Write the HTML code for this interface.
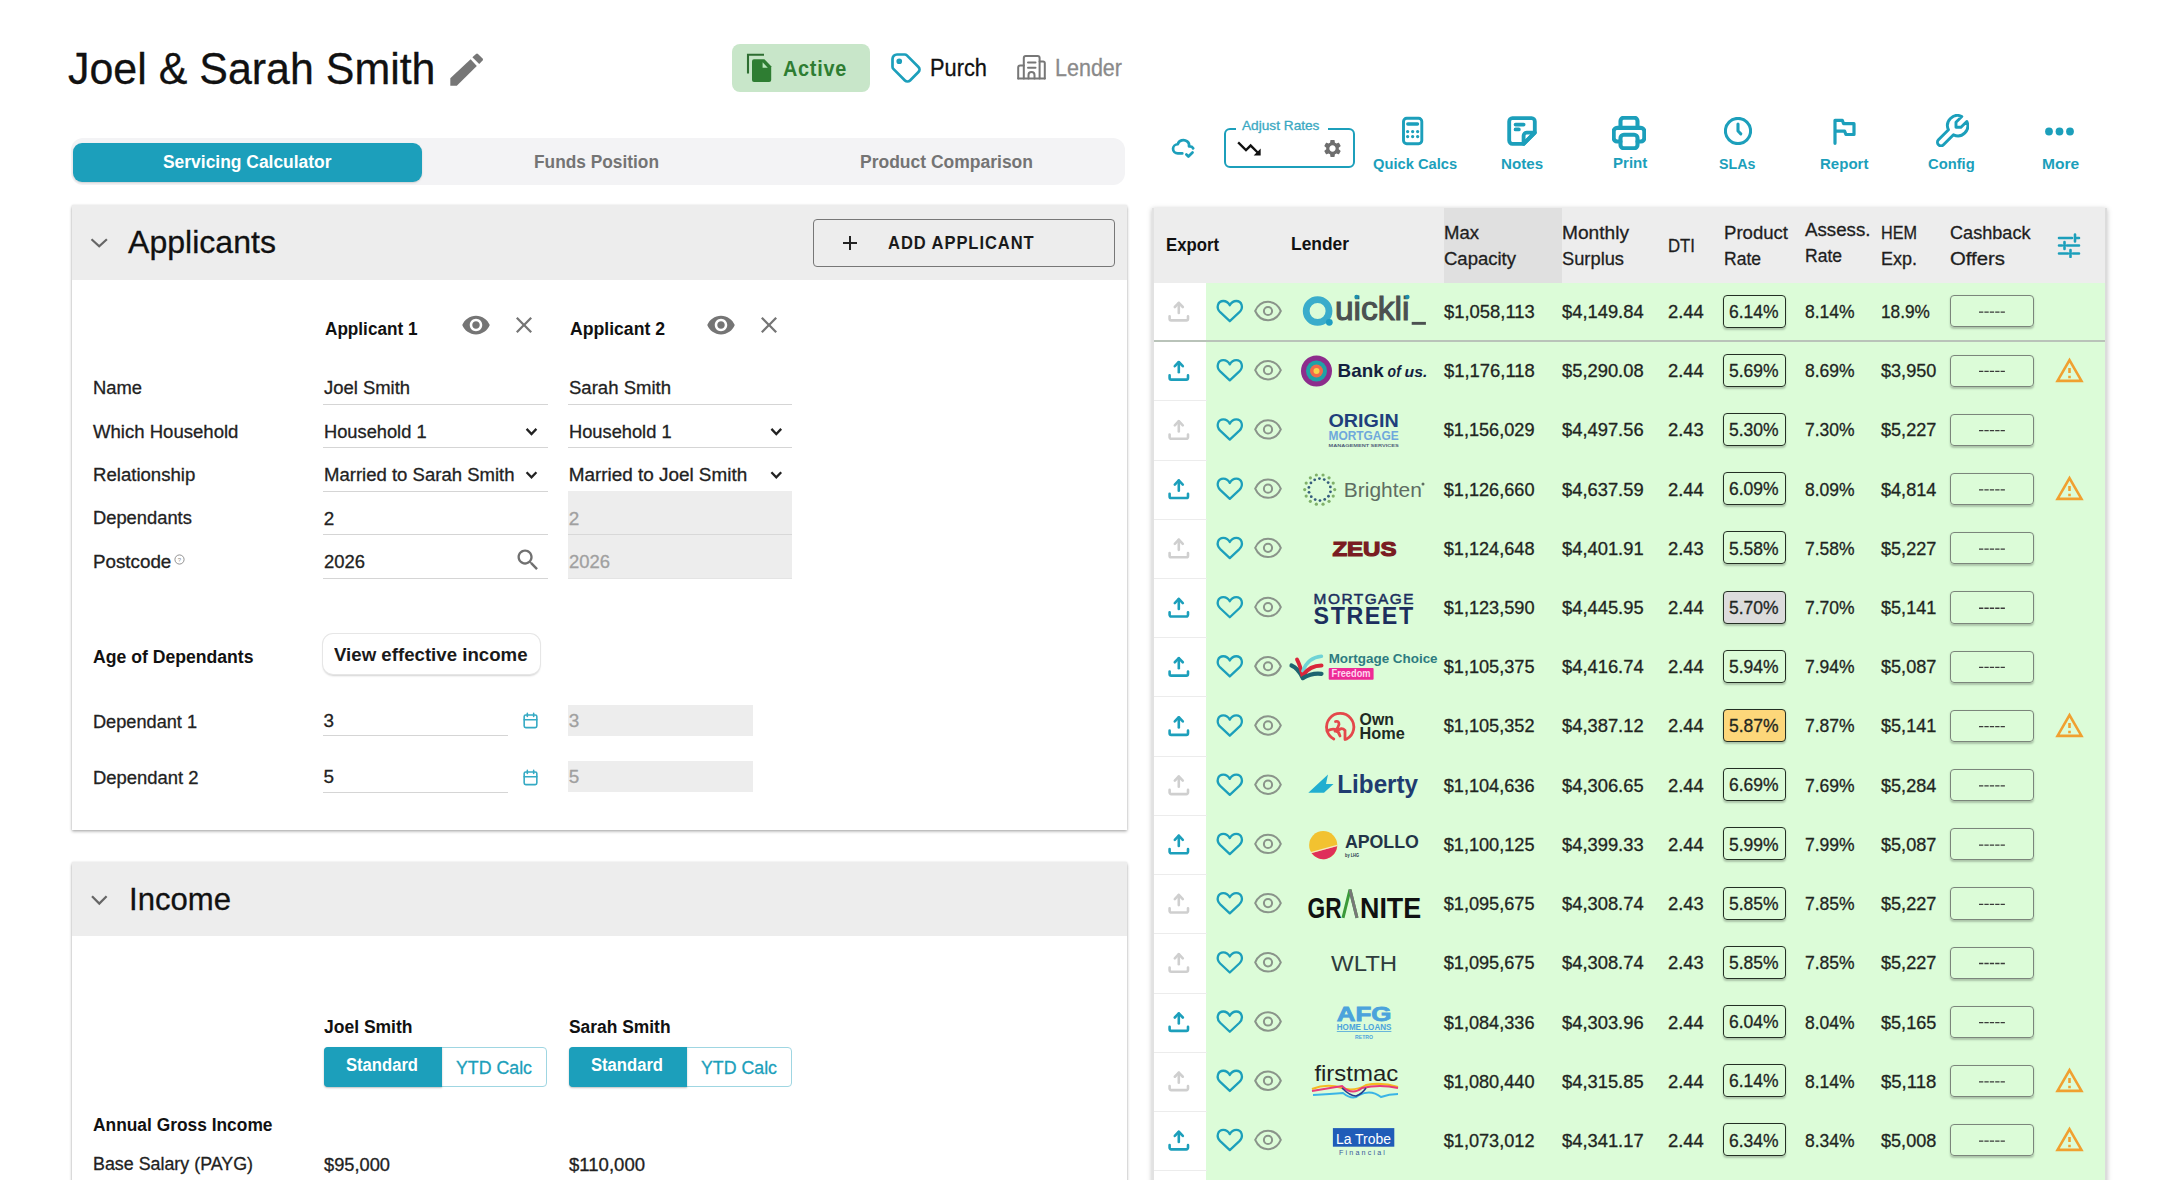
<!DOCTYPE html>
<html><head><meta charset="utf-8"><style>
html,body{margin:0;padding:0;}
body{width:2184px;height:1180px;position:relative;overflow:hidden;background:#fff;font-family:"Liberation Sans",sans-serif;}
.t{position:absolute;white-space:nowrap;line-height:1;transform-origin:0 0;}
.r{position:absolute;}
</style></head><body>
<div class="t" style="left:67.50px;top:46.00px;font-size:45.06px;color:#111;-webkit-text-stroke:0.3px #111;transform:scaleX(0.9531);">Joel &amp; Sarah Smith</div>
<svg class="r" style="left:0;top:0" width="2184" height="1180" viewBox="0 0 2184 1180"><g fill="#767676"><path d="M450.3 78.3L470.6 59.3L476.8 65.9L456.8 85.8H450.3Z"/><path d="M472.4 57.3L476 54a1.5 1.5 0 0 1 2 0l4.6 4.6a1.5 1.5 0 0 1 0 2l-3.4 3.5Z"/></g></svg>
<div class="r" style="left:732.00px;top:43.50px;width:138.00px;height:48.00px;background:#c8e6c9;border-radius:8px;"></div>
<svg class="r" style="left:0;top:0" width="2184" height="1180" viewBox="0 0 2184 1180"><path d="M748 73.4V54.8H764" fill="none" stroke="#2e6e32" stroke-width="2.1"/><path fill="#2e7d32" d="M754 59.2h10.4l6.8 7.1V79.9a2 2 0 0 1-2 2H754a2 2 0 0 1-2-2V61.2a2 2 0 0 1 2-2z"/><path fill="#b8e6bb" d="M762.6 62.3v5.4h5.2z"/></svg>
<div class="t" style="left:783.00px;top:58.00px;font-size:21.80px;font-weight:bold;color:#2e7d32;transform:scaleX(0.9112);letter-spacing:0.8px;">Active</div>
<svg class="r" style="left:888.00px;top:50.00px;" width="36.00" height="36.00" viewBox="0 0 24 24"><g fill="none" stroke="#1c9fbb" stroke-width="1.8" stroke-linecap="round" stroke-linejoin="round"><path d="M7.5 7.5m-1 0a1 1 0 1 0 2 0a1 1 0 1 0 -2 0"/><path d="M3 6v5.172a2 2 0 0 0 .586 1.414l7.71 7.71a2.410 2.410 0 0 0 3.408 0l5.592 -5.592a2.410 2.410 0 0 0 0 -3.408l-7.710 -7.710a2 2 0 0 0 -1.414 -.586h-5.172a3 3 0 0 0 -3 3z"/></g></svg>
<div class="t" style="left:930.00px;top:56.00px;font-size:23.98px;color:#111;-webkit-text-stroke:0.3px #111;transform:scaleX(0.9104);">Purch</div>
<svg class="r" style="left:0;top:0" width="2184" height="1180" viewBox="0 0 2184 1180"><g fill="none" stroke="#777" stroke-width="2" stroke-linejoin="round" stroke-linecap="round"><path d="M1023.8 78.5V58a2 2 0 0 1 2-2h11.8a2 2 0 0 1 2 2v20.5"/><path d="M1018.2 78.5V67.5a2 2 0 0 1 2-2h3.6M1039.6 61.6h3.6a1.6 1.6 0 0 1 1.6 1.6V78.5"/><path d="M1018.2 78.5H1044.8"/><path d="M1028 62.5h7.5M1028 67.7h7.5"/><path d="M1028.5 78.5v-3.5a3 3 0 0 1 6 0v3.5"/></g></svg>
<div class="t" style="left:1055.00px;top:56.00px;font-size:23.98px;color:#8a8a8a;-webkit-text-stroke:0.3px #8a8a8a;transform:scaleX(0.8978);">Lender</div>
<div class="r" style="left:71.00px;top:138.00px;width:1054.00px;height:47.00px;background:#f3f3f5;border-radius:12px;"></div>
<div class="r" style="left:73.00px;top:143.00px;width:349.00px;height:39.00px;background:#1c9fbb;border-radius:9px;box-shadow:0 1px 2px rgba(0,0,0,.15);"></div>
<div class="t" style="left:163.00px;top:153.00px;font-size:18.90px;font-weight:bold;color:#fff;transform:scaleX(0.9225);">Servicing Calculator</div>
<div class="t" style="left:534.00px;top:153.00px;font-size:18.90px;font-weight:bold;color:#747474;transform:scaleX(0.9160);">Funds Position</div>
<div class="t" style="left:860.00px;top:153.00px;font-size:18.90px;font-weight:bold;color:#747474;transform:scaleX(0.9259);">Product Comparison</div>
<div class="r" style="left:71.50px;top:205.00px;width:1055.00px;height:625.00px;background:#fff;box-shadow:0 1.5px 3px rgba(0,0,0,.3),0 0 2px rgba(0,0,0,.12);"></div>
<div class="r" style="left:71.50px;top:205.00px;width:1055.00px;height:75.00px;background:#ededed;"></div>
<svg class="r" style="left:0;top:0" width="2184" height="1180" viewBox="0 0 2184 1180"><path d="M91.5 239.2L99.2 246.3L106.9 239.2" fill="none" stroke="#666" stroke-width="2.2"/></svg>
<div class="t" style="left:128.00px;top:226.00px;font-size:31.98px;color:#111;-webkit-text-stroke:0.3px #111;transform:scaleX(1.0033);">Applicants</div>
<div class="r" style="left:813.00px;top:218.50px;width:302.00px;height:48.00px;border:1.5px solid #777;border-radius:4px;box-sizing:border-box;"></div>
<svg class="r" style="left:838.00px;top:231.00px;" width="24.00" height="24.00" viewBox="0 0 24 24"><path fill="#222" d="M19 13h-6v6h-2v-6H5v-2h6V5h2v6h6v2z"/></svg>
<div class="t" style="left:888.00px;top:233.00px;font-size:19.19px;font-weight:bold;color:#1a1a1a;transform:scaleX(0.8610);letter-spacing:1.1px;">ADD APPLICANT</div>
<div class="t" style="left:325.00px;top:320.00px;font-size:18.90px;font-weight:bold;color:#111;transform:scaleX(0.9084);">Applicant 1</div>
<div class="t" style="left:570.00px;top:320.00px;font-size:18.90px;font-weight:bold;color:#111;transform:scaleX(0.9329);">Applicant 2</div>
<svg class="r" style="left:460.50px;top:309.50px;" width="30.00" height="30.00" viewBox="0 0 24 24"><path fill="#757575" d="M12 4.5C7 4.5 2.73 7.61 1 12c1.73 4.39 6 7.5 11 7.5s9.27-3.11 11-7.5c-1.73-4.39-6-7.5-11-7.5zM12 17c-2.76 0-5-2.24-5-5s2.24-5 5-5 5 2.240 5 5-2.24 5-5 5zm0-8c-1.66 0-3 1.34-3 3s1.34 3 3 3 3-1.34 3-3-1.34-3-3-3z"/></svg>
<svg class="r" style="left:512.00px;top:313.00px;" width="24.00" height="24.00" viewBox="1.5 1.5 21 21"><path fill="#757575" d="M19 6.41L17.59 5 12 10.59 6.41 5 5 6.41 10.59 12 5 17.59 6.41 19 12 13.41 17.59 19 19 17.59 13.41 12z"/></svg>
<svg class="r" style="left:705.50px;top:309.50px;" width="30.00" height="30.00" viewBox="0 0 24 24"><path fill="#757575" d="M12 4.5C7 4.5 2.73 7.61 1 12c1.73 4.39 6 7.5 11 7.5s9.27-3.11 11-7.5c-1.73-4.39-6-7.5-11-7.5zM12 17c-2.76 0-5-2.24-5-5s2.24-5 5-5 5 2.240 5 5-2.24 5-5 5zm0-8c-1.66 0-3 1.34-3 3s1.34 3 3 3 3-1.34 3-3-1.34-3-3-3z"/></svg>
<svg class="r" style="left:757.00px;top:313.00px;" width="24.00" height="24.00" viewBox="1.5 1.5 21 21"><path fill="#757575" d="M19 6.41L17.59 5 12 10.59 6.41 5 5 6.41 10.59 12 5 17.59 6.41 19 12 13.41 17.59 19 19 17.59 13.41 12z"/></svg>
<div class="t" style="left:93.00px;top:379.00px;font-size:18.90px;color:#222;-webkit-text-stroke:0.3px #222;transform:scaleX(0.9727);">Name</div>
<div class="t" style="left:93.00px;top:423.00px;font-size:18.90px;color:#222;-webkit-text-stroke:0.3px #222;transform:scaleX(0.9822);">Which Household</div>
<div class="t" style="left:93.00px;top:466.00px;font-size:18.90px;color:#222;-webkit-text-stroke:0.3px #222;transform:scaleX(0.9841);">Relationship</div>
<div class="t" style="left:93.00px;top:509.00px;font-size:18.90px;color:#222;-webkit-text-stroke:0.3px #222;transform:scaleX(0.9701);">Dependants</div>
<div class="t" style="left:93.00px;top:553.00px;font-size:18.90px;color:#222;-webkit-text-stroke:0.3px #222;transform:scaleX(0.9943);">Postcode</div>
<svg class="r" style="left:173.50px;top:553.50px;" width="11.00" height="11.00" viewBox="0 0 24 24"><circle cx="12" cy="12" r="10" fill="none" stroke="#888" stroke-width="2"/><text x="12" y="17" font-size="13" text-anchor="middle" fill="#888" font-family="Liberation Sans">?</text></svg>
<div class="r" style="left:323.00px;top:403.50px;width:225.00px;height:1.20px;background:#d5d5d5;"></div>
<div class="r" style="left:323.00px;top:447.00px;width:225.00px;height:1.20px;background:#d5d5d5;"></div>
<div class="r" style="left:323.00px;top:490.50px;width:225.00px;height:1.20px;background:#d5d5d5;"></div>
<div class="r" style="left:323.00px;top:534.00px;width:225.00px;height:1.20px;background:#d5d5d5;"></div>
<div class="r" style="left:323.00px;top:577.50px;width:225.00px;height:1.20px;background:#d5d5d5;"></div>
<div class="r" style="left:568.00px;top:403.50px;width:224.00px;height:1.20px;background:#d5d5d5;"></div>
<div class="r" style="left:568.00px;top:447.00px;width:224.00px;height:1.20px;background:#d5d5d5;"></div>
<div class="r" style="left:568.00px;top:490.50px;width:224.00px;height:1.20px;background:#d5d5d5;"></div>
<div class="r" style="left:568.00px;top:491.00px;width:224.00px;height:87.50px;background:#ededed;"></div>
<div class="r" style="left:568.00px;top:534.00px;width:224.00px;height:1.20px;background:#d8d8d8;"></div>
<div class="r" style="left:568.00px;top:577.50px;width:224.00px;height:1.20px;background:#e4e4e4;"></div>
<div class="t" style="left:323.70px;top:379.00px;font-size:18.90px;color:#222;-webkit-text-stroke:0.3px #222;transform:scaleX(0.9752);">Joel Smith</div>
<div class="t" style="left:568.70px;top:379.00px;font-size:18.90px;color:#222;-webkit-text-stroke:0.3px #222;transform:scaleX(0.9815);">Sarah Smith</div>
<div class="t" style="left:323.70px;top:423.00px;font-size:18.90px;color:#222;-webkit-text-stroke:0.3px #222;transform:scaleX(0.9666);">Household 1</div>
<div class="t" style="left:568.70px;top:423.00px;font-size:18.90px;color:#222;-webkit-text-stroke:0.3px #222;transform:scaleX(0.9666);">Household 1</div>
<div class="t" style="left:323.70px;top:466.00px;font-size:18.90px;color:#222;-webkit-text-stroke:0.3px #222;transform:scaleX(0.9809);">Married to Sarah Smith</div>
<div class="t" style="left:568.70px;top:466.00px;font-size:18.90px;color:#222;-webkit-text-stroke:0.3px #222;">Married to Joel Smith</div>
<svg class="r" style="left:0;top:0" width="2184" height="1180" viewBox="0 0 2184 1180"><path d="M526.6 428.90000000000003L531.5 434.0L536.4 428.90000000000003" fill="none" stroke="#222" stroke-width="2.3"/></svg>
<svg class="r" style="left:0;top:0" width="2184" height="1180" viewBox="0 0 2184 1180"><path d="M526.6 472.3L531.5 477.4L536.4 472.3" fill="none" stroke="#222" stroke-width="2.3"/></svg>
<svg class="r" style="left:0;top:0" width="2184" height="1180" viewBox="0 0 2184 1180"><path d="M771.4 428.90000000000003L776.3 434.0L781.1999999999999 428.90000000000003" fill="none" stroke="#222" stroke-width="2.3"/></svg>
<svg class="r" style="left:0;top:0" width="2184" height="1180" viewBox="0 0 2184 1180"><path d="M771.4 472.3L776.3 477.4L781.1999999999999 472.3" fill="none" stroke="#222" stroke-width="2.3"/></svg>
<div class="t" style="left:323.70px;top:510.00px;font-size:18.90px;color:#222;-webkit-text-stroke:0.3px #222;">2</div>
<div class="t" style="left:568.70px;top:510.00px;font-size:18.90px;color:#a0a0a0;-webkit-text-stroke:0.3px #a0a0a0;">2</div>
<div class="t" style="left:323.70px;top:553.00px;font-size:18.90px;color:#222;-webkit-text-stroke:0.3px #222;transform:scaleX(0.9762);">2026</div>
<div class="t" style="left:568.70px;top:553.00px;font-size:18.90px;color:#a0a0a0;-webkit-text-stroke:0.3px #a0a0a0;transform:scaleX(0.9762);">2026</div>
<svg class="r" style="left:514.00px;top:546.00px;" width="28.00" height="28.00" viewBox="0 0 24 24"><path fill="#707070" d="M15.5 14h-.79l-.28-.27C15.41 12.59 16 11.11 16 9.5 16 5.91 13.09 3 9.5 3S3 5.91 3 9.5 5.91 16 9.5 16c1.61 0 3.09-.59 4.23-1.57l.27.28v.79l5 4.99L20.49 19l-4.99-5zm-6 0C7.01 14 5 11.99 5 9.5S7.01 5 9.5 5 14 7.01 14 9.5 11.99 14 9.5 14z"/></svg>
<div class="t" style="left:93.20px;top:648.00px;font-size:18.90px;font-weight:bold;color:#111;transform:scaleX(0.9323);">Age of Dependants</div>
<div class="r" style="left:323.00px;top:633.50px;width:216.50px;height:40.50px;border-radius:10px;box-shadow:0 0 0 1px #e6e6e6,0 1.5px 2px rgba(0,0,0,.18);background:#fff;"></div>
<div class="t" style="left:334.00px;top:646.00px;font-size:18.90px;font-weight:bold;color:#1a1a1a;transform:scaleX(0.9874);">View effective income</div>
<div class="t" style="left:93.00px;top:713.00px;font-size:18.90px;color:#222;-webkit-text-stroke:0.3px #222;transform:scaleX(0.9617);">Dependant 1</div>
<div class="t" style="left:93.00px;top:769.00px;font-size:18.90px;color:#222;-webkit-text-stroke:0.3px #222;transform:scaleX(0.9756);">Dependant 2</div>
<div class="t" style="left:323.50px;top:712.00px;font-size:18.90px;color:#222;-webkit-text-stroke:0.3px #222;">3</div>
<div class="t" style="left:323.50px;top:768.00px;font-size:18.90px;color:#222;-webkit-text-stroke:0.3px #222;">5</div>
<div class="r" style="left:323.00px;top:735.00px;width:185.00px;height:1.20px;background:#d5d5d5;"></div>
<div class="r" style="left:323.00px;top:792.00px;width:185.00px;height:1.20px;background:#d5d5d5;"></div>
<div class="r" style="left:568.00px;top:704.50px;width:184.50px;height:31.50px;background:#ededed;"></div>
<div class="r" style="left:568.00px;top:760.50px;width:184.50px;height:31.50px;background:#ededed;"></div>
<div class="t" style="left:568.70px;top:712.00px;font-size:18.90px;color:#a0a0a0;-webkit-text-stroke:0.3px #a0a0a0;">3</div>
<div class="t" style="left:568.70px;top:768.00px;font-size:18.90px;color:#a0a0a0;-webkit-text-stroke:0.3px #a0a0a0;">5</div>
<svg class="r" style="left:521.00px;top:711.00px;" width="19.00" height="19.00" viewBox="0 0 24 24"><g fill="none" stroke="#35aac4" stroke-width="2" stroke-linecap="round" stroke-linejoin="round"><path d="M4 7a2 2 0 0 1 2 -2h12a2 2 0 0 1 2 2v12a2 2 0 0 1 -2 2h-12a2 2 0 0 1 -2 -2v-12z"/><path d="M16 3v4M8 3v4M4 11h16"/></g></svg>
<svg class="r" style="left:521.00px;top:767.50px;" width="19.00" height="19.00" viewBox="0 0 24 24"><g fill="none" stroke="#35aac4" stroke-width="2" stroke-linecap="round" stroke-linejoin="round"><path d="M4 7a2 2 0 0 1 2 -2h12a2 2 0 0 1 2 2v12a2 2 0 0 1 -2 2h-12a2 2 0 0 1 -2 -2v-12z"/><path d="M16 3v4M8 3v4M4 11h16"/></g></svg>
<div class="r" style="left:71.50px;top:861.50px;width:1055.00px;height:330.00px;background:#fff;box-shadow:0 1.5px 3px rgba(0,0,0,.3),0 0 2px rgba(0,0,0,.12);"></div>
<div class="r" style="left:71.50px;top:861.50px;width:1055.00px;height:74.00px;background:#ededed;"></div>
<svg class="r" style="left:0;top:0" width="2184" height="1180" viewBox="0 0 2184 1180"><path d="M92 896.2L99.3 903.6L106.6 896.2" fill="none" stroke="#666" stroke-width="2.2"/></svg>
<div class="t" style="left:129.00px;top:883.00px;font-size:31.98px;color:#111;-webkit-text-stroke:0.3px #111;transform:scaleX(0.9730);">Income</div>
<div class="t" style="left:323.80px;top:1018.00px;font-size:18.90px;font-weight:bold;color:#111;transform:scaleX(0.9264);">Joel Smith</div>
<div class="t" style="left:568.60px;top:1018.00px;font-size:18.90px;font-weight:bold;color:#111;transform:scaleX(0.9209);">Sarah Smith</div>
<div class="r" style="left:323.80px;top:1046.50px;width:223.00px;height:40.00px;border:1.2px solid #9fd6e2;border-radius:4px;box-sizing:border-box;background:#fff;"></div>
<div class="r" style="left:323.80px;top:1046.50px;width:118.00px;height:40.00px;background:#1c9fbb;border-radius:4px 0 0 4px;box-shadow:0 1px 2px rgba(0,0,0,.25);"></div>
<div class="t" style="left:346.40px;top:1056.00px;font-size:18.90px;font-weight:bold;color:#fff;transform:scaleX(0.8794);">Standard</div>
<div class="t" style="left:456.00px;top:1059.00px;font-size:18.90px;color:#1c9fbb;-webkit-text-stroke:0.3px #1c9fbb;transform:scaleX(0.9403);">YTD Calc</div>
<div class="r" style="left:568.60px;top:1046.50px;width:223.00px;height:40.00px;border:1.2px solid #9fd6e2;border-radius:4px;box-sizing:border-box;background:#fff;"></div>
<div class="r" style="left:568.60px;top:1046.50px;width:118.00px;height:40.00px;background:#1c9fbb;border-radius:4px 0 0 4px;box-shadow:0 1px 2px rgba(0,0,0,.25);"></div>
<div class="t" style="left:591.20px;top:1056.00px;font-size:18.90px;font-weight:bold;color:#fff;transform:scaleX(0.8794);">Standard</div>
<div class="t" style="left:700.80px;top:1059.00px;font-size:18.90px;color:#1c9fbb;-webkit-text-stroke:0.3px #1c9fbb;transform:scaleX(0.9403);">YTD Calc</div>
<div class="t" style="left:93.00px;top:1116.00px;font-size:18.90px;font-weight:bold;color:#111;transform:scaleX(0.9193);">Annual Gross Income</div>
<div class="t" style="left:93.00px;top:1155.00px;font-size:18.90px;color:#222;-webkit-text-stroke:0.3px #222;transform:scaleX(0.9448);">Base Salary (PAYG)</div>
<div class="t" style="left:323.80px;top:1156.00px;font-size:18.90px;color:#222;-webkit-text-stroke:0.3px #222;transform:scaleX(0.9670);">$95,000</div>
<div class="t" style="left:568.60px;top:1156.00px;font-size:18.90px;color:#222;-webkit-text-stroke:0.3px #222;transform:scaleX(0.9826);">$110,000</div>
<svg class="r" style="left:1171.40px;top:135.40px;" width="24.60" height="24.60" viewBox="0 0 24 24"><g fill="none" stroke="#1c9fbb" stroke-width="2.65" stroke-linecap="round" stroke-linejoin="round"><path d="M11 18.004h-4.343c-2.572 -.004 -4.657 -2.011 -4.657 -4.487c0 -2.475 2.085 -4.482 4.657 -4.482c.393 -1.762 1.794 -3.2 3.675 -3.773c1.88 -.572 3.956 -.193 5.444 1c1.488 1.19 2.162 3.007 1.77 4.769h.99c1.388 0 2.585 .82 3.138 2.007"/><path d="M15 19l2 2l4 -4"/></g></svg>
<div class="r" style="left:1224.30px;top:127.60px;width:130.30px;height:40.50px;border:2.6px solid #1c9fbb;border-radius:6px;box-sizing:border-box;"></div>
<div class="r" style="left:1236.00px;top:124.00px;width:92.00px;height:8.00px;background:#fff;"></div>
<div class="t" style="left:1241.50px;top:119.00px;font-size:13.37px;color:#3aa8c2;-webkit-text-stroke:0.3px #3aa8c2;transform:scaleX(1.0225);">Adjust Rates</div>
<svg class="r" style="left:1235.00px;top:139.00px;" width="28.00" height="19.00" viewBox="0 0 24 16"><path fill="#111" d="M16 14l2.29-2.29-4.88-4.88-4 4L2 3.41 3.41 2l6 6 4-4 6.3 6.29L22 8v6z"/></svg>
<svg class="r" style="left:1322.00px;top:138.00px;" width="21.00" height="21.00" viewBox="0 0 24 24"><path fill="#6e6e6e" d="M19.14 12.94c.04-.3.06-.61.06-.94 0-.32-.02-.64-.07-.94l2.03-1.58c.18-.14.23-.41.12-.61l-1.92-3.32c-.12-.22-.37-.29-.59-.22l-2.39.96c-.5-.38-1.03-.7-1.62-.94l-.36-2.54c-.04-.24-.24-.41-.48-.41h-3.84c-.24 0-.43.17-.47.41l-.36 2.54c-.59.24-1.13.57-1.62.94l-2.39-.96c-.22-.08-.47 0-.59.22L2.74 8.87c-.12.21-.08.47.12.61l2.03 1.58c-.05.3-.09.63-.09.94s.02.64.07.94l-2.03 1.58c-.18.14-.23.41-.12.61l1.92 3.32c.12.22.37.29.59.22l2.39-.96c.5.38 1.03.7 1.62.94l.36 2.54c.05.24.24.41.48.41h3.84c.24 0 .44-.17.47-.41l.36-2.54c.59-.24 1.13-.56 1.62-.94l2.39.96c.22.08.47 0 .59-.22l1.92-3.32c.12-.22.07-.47-.12-.61l-2.01-1.58zM12 15.6c-1.98 0-3.6-1.62-3.6-3.6s1.62-3.6 3.6-3.6 3.6 1.62 3.6 3.6-1.62 3.6-3.6 3.6z"/></svg>
<svg class="r" style="left:1390.00px;top:110.00px;" width="40.00" height="40.00" viewBox="1390 110 40 40"><g fill="none" stroke="#1c9fbb" stroke-width="2.9" stroke-linecap="round" stroke-linejoin="round"><rect x="1403.5" y="118.3" width="18.3" height="25.4" rx="3.2"/><path d="M1407.8 124H1417.5" stroke-width="3.4"/><path d="M1407.6 131.6h.1M1412.6 131.6h.1M1417.6 131.6h.1M1407.6 136.6h.1M1412.6 136.6h.1M1417.6 136.6h.1" stroke-width="3.2"/></g></svg>
<div class="t" style="left:1372.50px;top:157.00px;font-size:14.83px;font-weight:bold;color:#1c9fbb;transform:scaleX(0.9910);">Quick Calcs</div>
<svg class="r" style="left:1506.00px;top:115.00px;" width="32.00" height="32.00" viewBox="2 2 20 20"><g fill="none" stroke="#1c9fbb" stroke-width="2.4" stroke-linecap="round" stroke-linejoin="round"><path d="M13 20h-7a2 2 0 0 1 -2 -2v-12a2 2 0 0 1 2 -2h12a2 2 0 0 1 2 2v7z"/><path d="M13 20l7 -7h-5a2 2 0 0 0 -2 2z"/><path d="M8 8h5M8 11h2"/></g></svg>
<div class="t" style="left:1500.60px;top:157.00px;font-size:14.83px;font-weight:bold;color:#1c9fbb;transform:scaleX(1.0205);">Notes</div>
<svg class="r" style="left:1612.00px;top:116.00px;" width="34.00" height="34.00" viewBox="2 2 20 20"><g fill="none" stroke="#1c9fbb" stroke-width="2.4" stroke-linecap="round" stroke-linejoin="round"><path d="M17 17h2a2 2 0 0 0 2 -2v-4a2 2 0 0 0 -2 -2h-14a2 2 0 0 0 -2 2v4a2 2 0 0 0 2 2h2"/><path d="M17 9v-4a2 2 0 0 0 -2 -2h-6a2 2 0 0 0 -2 2v4"/><path d="M7 13m0 2a2 2 0 0 1 2 -2h6a2 2 0 0 1 2 2v4a2 2 0 0 1 -2 2h-6a2 2 0 0 1 -2 -2z"/></g></svg>
<div class="t" style="left:1612.60px;top:156.00px;font-size:14.83px;font-weight:bold;color:#1c9fbb;transform:scaleX(1.0168);">Print</div>
<svg class="r" style="left:1723.80px;top:116.50px;" width="28.00" height="28.00" viewBox="2 2 20 20"><g fill="none" stroke="#1c9fbb" stroke-width="2.2" stroke-linecap="round" stroke-linejoin="round"><path d="M3 12a9 9 0 1 0 18 0a9 9 0 0 0 -18 0"/><path d="M12 7v5l2 2"/></g></svg>
<div class="t" style="left:1719.00px;top:157.00px;font-size:14.83px;font-weight:bold;color:#1c9fbb;transform:scaleX(0.9615);">SLAs</div>
<svg class="r" style="left:1820.00px;top:110.00px;" width="40.00" height="40.00" viewBox="1820 110 40 40"><g fill="none" stroke="#1c9fbb" stroke-width="3.2" stroke-linecap="round" stroke-linejoin="round"><path d="M1835 143.3V120.3H1842.3l1.3 3.4H1854V134.5H1845.9l-1.3-3.4H1835"/></g></svg>
<div class="t" style="left:1820.30px;top:157.00px;font-size:14.83px;font-weight:bold;color:#1c9fbb;transform:scaleX(1.0139);">Report</div>
<svg class="r" style="left:1935.50px;top:113.60px;" width="33.30" height="33.30" viewBox="2 2 20 20"><g transform="translate(24,0) scale(-1,1)"><g fill="none" stroke="#1c9fbb" stroke-width="1.75" stroke-linecap="round" stroke-linejoin="round"><path d="M7 10h3v-3l-3.5 -3.5a6 6 0 0 1 8 8l6 6a2 2 0 0 1 -3 3l-6 -6a6 6 0 0 1 -8 -8l3.5 3.5"/></g></g></svg>
<div class="t" style="left:1928.20px;top:157.00px;font-size:14.83px;font-weight:bold;color:#1c9fbb;transform:scaleX(0.9938);">Config</div>
<svg class="r" style="left:2043.00px;top:125.00px;" width="33.00" height="13.00" viewBox="0 0 33 13"><circle cx="6" cy="6.5" r="3.9" fill="#1c9fbb"/><circle cx="16.5" cy="6.5" r="3.9" fill="#1c9fbb"/><circle cx="27" cy="6.5" r="3.9" fill="#1c9fbb"/></svg>
<div class="t" style="left:2041.50px;top:157.00px;font-size:14.83px;font-weight:bold;color:#1c9fbb;transform:scaleX(1.0511);">More</div>
<div class="r" style="left:1152.00px;top:208.00px;width:955.00px;height:1000.00px;background:#fff;box-shadow:0 1px 5px rgba(0,0,0,.25);"></div>
<div class="r" style="left:1152.00px;top:208.00px;width:955.00px;height:75.00px;background:#ededed;"></div>
<div class="r" style="left:1443.70px;top:208.00px;width:118.30px;height:75.00px;background:#e0e0e0;"></div>
<div class="t" style="left:1166.00px;top:236.00px;font-size:18.90px;font-weight:bold;color:#111;transform:scaleX(0.8859);">Export</div>
<div class="t" style="left:1290.80px;top:235.00px;font-size:18.90px;font-weight:bold;color:#111;transform:scaleX(0.9209);">Lender</div>
<div class="t" style="left:1443.70px;top:224.00px;font-size:18.90px;color:#1e1e1e;-webkit-text-stroke:0.3px #1e1e1e;transform:scaleX(0.9807);">Max</div>
<div class="t" style="left:1443.70px;top:250.00px;font-size:18.90px;color:#1e1e1e;-webkit-text-stroke:0.3px #1e1e1e;transform:scaleX(0.9796);">Capacity</div>
<div class="t" style="left:1562.00px;top:224.00px;font-size:18.90px;color:#1e1e1e;-webkit-text-stroke:0.3px #1e1e1e;transform:scaleX(1.0130);">Monthly</div>
<div class="t" style="left:1562.00px;top:250.00px;font-size:18.90px;color:#1e1e1e;-webkit-text-stroke:0.3px #1e1e1e;transform:scaleX(0.9680);">Surplus</div>
<div class="t" style="left:1668.40px;top:237.00px;font-size:18.90px;color:#1e1e1e;-webkit-text-stroke:0.3px #1e1e1e;transform:scaleX(0.8871);">DTI</div>
<div class="t" style="left:1723.60px;top:224.00px;font-size:18.90px;color:#1e1e1e;-webkit-text-stroke:0.3px #1e1e1e;transform:scaleX(0.9832);">Product</div>
<div class="t" style="left:1723.60px;top:250.00px;font-size:18.90px;color:#1e1e1e;-webkit-text-stroke:0.3px #1e1e1e;transform:scaleX(0.9275);">Rate</div>
<div class="t" style="left:1805.20px;top:221.00px;font-size:18.90px;color:#1e1e1e;-webkit-text-stroke:0.3px #1e1e1e;transform:scaleX(0.9901);">Assess.</div>
<div class="t" style="left:1805.20px;top:247.00px;font-size:18.90px;color:#1e1e1e;-webkit-text-stroke:0.3px #1e1e1e;transform:scaleX(0.9275);">Rate</div>
<div class="t" style="left:1881.20px;top:224.00px;font-size:18.90px;color:#1e1e1e;-webkit-text-stroke:0.3px #1e1e1e;transform:scaleX(0.8578);">HEM</div>
<div class="t" style="left:1881.20px;top:250.00px;font-size:18.90px;color:#1e1e1e;-webkit-text-stroke:0.3px #1e1e1e;transform:scaleX(0.9525);">Exp.</div>
<div class="t" style="left:1950.30px;top:224.00px;font-size:18.90px;color:#1e1e1e;-webkit-text-stroke:0.3px #1e1e1e;transform:scaleX(0.9583);">Cashback</div>
<div class="t" style="left:1950.30px;top:250.00px;font-size:18.90px;color:#1e1e1e;-webkit-text-stroke:0.3px #1e1e1e;transform:scaleX(1.0765);">Offers</div>
<svg class="r" style="left:2056.00px;top:232.00px;" width="26.00" height="26.00" viewBox="0 0 26 26"><g stroke="#1c9fbb" stroke-width="2.6" stroke-linecap="round"><path d="M3 6h13M21 6h2M19 2.5v7"/><path d="M3 13.5h3M11 13.5h12M8.5 10v7"/><path d="M3 21.5h9M17 21.5h6M14.5 18v7"/></g></svg>
<div class="r" style="left:1206.00px;top:283.00px;width:900.00px;height:1000.00px;background:#dcfcd8;"></div>
<svg class="r" style="left:0;top:0" width="2184" height="1180" viewBox="0 0 2184 1180"><g fill="none" stroke="#cfcfcf" stroke-width="2.6" stroke-linecap="round" stroke-linejoin="round"><path d="M1169.6 316.20v2.6a1.6 1.6 0 0 0 1.6 1.6h15.2a1.6 1.6 0 0 0 1.6 -1.6v-2.6"/><path d="M1178.8 313.00V303.00"/><path d="M1174.8 307.00L1178.8 302.80L1182.8 307.00"/></g><path fill="none" stroke="#1c9fbb" stroke-width="2.3" stroke-linejoin="round" d="M1229.8 321.20L1220.2 312.20C1215.5 307.50 1218 301.00 1223.3 301.00C1226.3 301.00 1228.6 303.00 1229.8 305.20C1231 303.00 1233.3 301.00 1236.3 301.00C1241.6 301.00 1244.1 307.50 1239.4 312.20Z"/><g fill="none" stroke="#8a948a" stroke-width="2"><path d="M1255.2 311.00C1258 304.50 1262.5 301.80 1268 301.80C1273.5 301.80 1278 304.50 1280.8 311.00C1278 317.50 1273.5 320.20 1268 320.20C1262.5 320.20 1258 317.50 1255.2 311.00Z"/><circle cx="1268" cy="311.00" r="4.1"/></g></svg>
<svg class="r" style="left:0;top:0;overflow:visible" width="2184" height="1180" viewBox="0 0 2184 1180"><circle cx="1317.6" cy="311" r="11.4" fill="none" stroke="#3aaccb" stroke-width="6.8"/><circle cx="1329.3" cy="322.3" r="3.4" fill="#1f9dc2"/><text x="1335" y="319.5" font-size="32.41" font-weight="normal" fill="#4b5050" textLength="74.4" lengthAdjust="spacingAndGlyphs" font-family="Liberation Sans" stroke="#4b5050" stroke-width="1.1">uickli</text><rect x="1411.7" y="321.9" width="14.2" height="2.9" fill="#4b5050"/><circle cx="1356.6" cy="296.9" r="2.2" fill="#1a8fae"/><circle cx="1407.4" cy="296.9" r="2.2" fill="#1a8fae"/></svg>
<div class="t" style="left:1443.70px;top:303.00px;font-size:18.17px;color:#1f261f;-webkit-text-stroke:0.3px #1f261f;transform:scaleX(1.0134);">$1,058,113</div>
<div class="t" style="left:1562.00px;top:303.00px;font-size:18.17px;color:#1f261f;-webkit-text-stroke:0.3px #1f261f;transform:scaleX(1.0105);">$4,149.84</div>
<div class="t" style="left:1667.60px;top:303.00px;font-size:18.17px;color:#1f261f;-webkit-text-stroke:0.3px #1f261f;transform:scaleX(1.0134);">2.44</div>
<div class="r" style="left:1723.00px;top:294.50px;width:62.70px;height:33.00px;border:1.8px solid #243024;border-radius:4px;box-sizing:border-box;background:transparent;box-shadow:0 1.5px 2px rgba(0,0,0,.22);"></div>
<div class="t" style="left:1729.10px;top:303.00px;font-size:18.17px;color:#1f261f;-webkit-text-stroke:0.3px #1f261f;transform:scaleX(0.9637);">6.14%</div>
<div class="t" style="left:1804.80px;top:303.00px;font-size:18.17px;color:#1f261f;-webkit-text-stroke:0.3px #1f261f;transform:scaleX(0.9637);">8.14%</div>
<div class="t" style="left:1881.00px;top:303.00px;font-size:18.17px;color:#1f261f;-webkit-text-stroke:0.3px #1f261f;transform:scaleX(0.9501);">18.9%</div>
<div class="r" style="left:1950.10px;top:295.30px;width:84.40px;height:32.20px;border:1.3px solid #7b857b;border-radius:4px;box-sizing:border-box;box-shadow:0 1.5px 2px rgba(0,0,0,.22);"></div>
<svg class="r" style="left:0;top:0" width="2184" height="1180" viewBox="0 0 2184 1180"><path d="M1979 312.20H2005" stroke="#3a3a3a" stroke-width="1.3" stroke-dasharray="4.3 1.1"/></svg>
<div class="r" style="left:1153.00px;top:341.21px;width:54.00px;height:1.00px;background:#ececec;"></div>
<svg class="r" style="left:0;top:0" width="2184" height="1180" viewBox="0 0 2184 1180"><g fill="none" stroke="#1c9fbb" stroke-width="2.6" stroke-linecap="round" stroke-linejoin="round"><path d="M1169.6 375.41v2.6a1.6 1.6 0 0 0 1.6 1.6h15.2a1.6 1.6 0 0 0 1.6 -1.6v-2.6"/><path d="M1178.8 372.21V362.21"/><path d="M1174.8 366.21L1178.8 362.01L1182.8 366.21"/></g><path fill="none" stroke="#1c9fbb" stroke-width="2.3" stroke-linejoin="round" d="M1229.8 380.41L1220.2 371.41C1215.5 366.71 1218 360.21 1223.3 360.21C1226.3 360.21 1228.6 362.21 1229.8 364.41C1231 362.21 1233.3 360.21 1236.3 360.21C1241.6 360.21 1244.1 366.71 1239.4 371.41Z"/><g fill="none" stroke="#8a948a" stroke-width="2"><path d="M1255.2 370.21C1258 363.71 1262.5 361.01 1268 361.01C1273.5 361.01 1278 363.71 1280.8 370.21C1278 376.71 1273.5 379.41 1268 379.41C1262.5 379.41 1258 376.71 1255.2 370.21Z"/><circle cx="1268" cy="370.21" r="4.1"/></g></svg>
<svg class="r" style="left:0;top:0;overflow:visible" width="2184" height="1180" viewBox="0 0 2184 1180"><circle cx="1316.5" cy="371" r="15.5" fill="#8d2c8c"/><circle cx="1316.5" cy="371" r="10.5" fill="#20a2a6"/><circle cx="1316.5" cy="371" r="6.5" fill="#f36a4a"/><circle cx="1316.5" cy="371" r="3" fill="#f7d54a"/><text x="1337.6" y="377" font-size="17.88" font-weight="bold" fill="#13213f" textLength="46" lengthAdjust="spacingAndGlyphs" font-family="Liberation Sans" >Bank</text><text x="1387.6" y="377" font-size="15.99" font-weight="bold" fill="#13213f" textLength="13.2" lengthAdjust="spacingAndGlyphs" font-family="Liberation Sans" font-style="italic">of</text><text x="1404.6" y="377" font-size="13.81" font-weight="bold" fill="#13213f" textLength="22.8" lengthAdjust="spacingAndGlyphs" font-family="Liberation Sans" font-style="italic">us.</text></svg>
<div class="t" style="left:1443.70px;top:362.00px;font-size:18.17px;color:#1f261f;-webkit-text-stroke:0.3px #1f261f;transform:scaleX(1.0134);">$1,176,118</div>
<div class="t" style="left:1562.00px;top:362.00px;font-size:18.17px;color:#1f261f;-webkit-text-stroke:0.3px #1f261f;transform:scaleX(1.0105);">$5,290.08</div>
<div class="t" style="left:1667.60px;top:362.00px;font-size:18.17px;color:#1f261f;-webkit-text-stroke:0.3px #1f261f;transform:scaleX(1.0134);">2.44</div>
<div class="r" style="left:1723.00px;top:353.71px;width:62.70px;height:33.00px;border:1.8px solid #243024;border-radius:4px;box-sizing:border-box;background:transparent;box-shadow:0 1.5px 2px rgba(0,0,0,.22);"></div>
<div class="t" style="left:1729.10px;top:362.00px;font-size:18.17px;color:#1f261f;-webkit-text-stroke:0.3px #1f261f;transform:scaleX(0.9637);">5.69%</div>
<div class="t" style="left:1804.80px;top:362.00px;font-size:18.17px;color:#1f261f;-webkit-text-stroke:0.3px #1f261f;transform:scaleX(0.9637);">8.69%</div>
<div class="t" style="left:1880.60px;top:362.00px;font-size:18.17px;color:#1f261f;-webkit-text-stroke:0.3px #1f261f;transform:scaleX(0.9961);">$3,950</div>
<div class="r" style="left:1950.10px;top:354.51px;width:84.40px;height:32.20px;border:1.3px solid #7b857b;border-radius:4px;box-sizing:border-box;box-shadow:0 1.5px 2px rgba(0,0,0,.22);"></div>
<svg class="r" style="left:0;top:0" width="2184" height="1180" viewBox="0 0 2184 1180"><path d="M1979 371.41H2005" stroke="#3a3a3a" stroke-width="1.3" stroke-dasharray="4.3 1.1"/></svg>
<svg class="r" style="left:2054.00px;top:354.71px;" width="31.00" height="31.00" viewBox="0 0 24 24"><path fill="#f0a030" d="M12 5.99L19.53 19H4.47L12 5.99M12 2L1 21h22L12 2zm1 14h-2v2h2v-2zm0-6h-2v4h2v-4z"/></svg>
<div class="r" style="left:1153.00px;top:400.42px;width:54.00px;height:1.00px;background:#ececec;"></div>
<svg class="r" style="left:0;top:0" width="2184" height="1180" viewBox="0 0 2184 1180"><g fill="none" stroke="#cfcfcf" stroke-width="2.6" stroke-linecap="round" stroke-linejoin="round"><path d="M1169.6 434.62v2.6a1.6 1.6 0 0 0 1.6 1.6h15.2a1.6 1.6 0 0 0 1.6 -1.6v-2.6"/><path d="M1178.8 431.42V421.42"/><path d="M1174.8 425.42L1178.8 421.22L1182.8 425.42"/></g><path fill="none" stroke="#1c9fbb" stroke-width="2.3" stroke-linejoin="round" d="M1229.8 439.62L1220.2 430.62C1215.5 425.92 1218 419.42 1223.3 419.42C1226.3 419.42 1228.6 421.42 1229.8 423.62C1231 421.42 1233.3 419.42 1236.3 419.42C1241.6 419.42 1244.1 425.92 1239.4 430.62Z"/><g fill="none" stroke="#8a948a" stroke-width="2"><path d="M1255.2 429.42C1258 422.92 1262.5 420.22 1268 420.22C1273.5 420.22 1278 422.92 1280.8 429.42C1278 435.92 1273.5 438.62 1268 438.62C1262.5 438.62 1258 435.92 1255.2 429.42Z"/><circle cx="1268" cy="429.42" r="4.1"/></g></svg>
<svg class="r" style="left:0;top:0;overflow:visible" width="2184" height="1180" viewBox="0 0 2184 1180"><text x="1328.5" y="427.4" font-size="18.90" font-weight="bold" fill="#1f3f7c" textLength="70.2" lengthAdjust="spacingAndGlyphs" font-family="Liberation Sans" >ORIGIN</text><text x="1328.5" y="439.6" font-size="12.06" font-weight="bold" fill="#6fa8dc" textLength="70.2" lengthAdjust="spacingAndGlyphs" font-family="Liberation Sans" >MORTGAGE</text><text x="1328.5" y="446.6" font-size="4.36" font-weight="bold" fill="#50607a" textLength="70.2" lengthAdjust="spacingAndGlyphs" font-family="Liberation Sans" >MANAGEMENT SERVICES</text></svg>
<div class="t" style="left:1443.70px;top:421.00px;font-size:18.17px;color:#1f261f;-webkit-text-stroke:0.3px #1f261f;">$1,156,029</div>
<div class="t" style="left:1562.00px;top:421.00px;font-size:18.17px;color:#1f261f;-webkit-text-stroke:0.3px #1f261f;transform:scaleX(1.0105);">$4,497.56</div>
<div class="t" style="left:1667.60px;top:421.00px;font-size:18.17px;color:#1f261f;-webkit-text-stroke:0.3px #1f261f;transform:scaleX(1.0134);">2.43</div>
<div class="r" style="left:1723.00px;top:412.92px;width:62.70px;height:33.00px;border:1.8px solid #243024;border-radius:4px;box-sizing:border-box;background:transparent;box-shadow:0 1.5px 2px rgba(0,0,0,.22);"></div>
<div class="t" style="left:1729.10px;top:421.00px;font-size:18.17px;color:#1f261f;-webkit-text-stroke:0.3px #1f261f;transform:scaleX(0.9637);">5.30%</div>
<div class="t" style="left:1804.80px;top:421.00px;font-size:18.17px;color:#1f261f;-webkit-text-stroke:0.3px #1f261f;transform:scaleX(0.9637);">7.30%</div>
<div class="t" style="left:1880.60px;top:421.00px;font-size:18.17px;color:#1f261f;-webkit-text-stroke:0.3px #1f261f;transform:scaleX(0.9961);">$5,227</div>
<div class="r" style="left:1950.10px;top:413.72px;width:84.40px;height:32.20px;border:1.3px solid #7b857b;border-radius:4px;box-sizing:border-box;box-shadow:0 1.5px 2px rgba(0,0,0,.22);"></div>
<svg class="r" style="left:0;top:0" width="2184" height="1180" viewBox="0 0 2184 1180"><path d="M1979 430.62H2005" stroke="#3a3a3a" stroke-width="1.3" stroke-dasharray="4.3 1.1"/></svg>
<div class="r" style="left:1153.00px;top:459.63px;width:54.00px;height:1.00px;background:#ececec;"></div>
<svg class="r" style="left:0;top:0" width="2184" height="1180" viewBox="0 0 2184 1180"><g fill="none" stroke="#1c9fbb" stroke-width="2.6" stroke-linecap="round" stroke-linejoin="round"><path d="M1169.6 493.83v2.6a1.6 1.6 0 0 0 1.6 1.6h15.2a1.6 1.6 0 0 0 1.6 -1.6v-2.6"/><path d="M1178.8 490.63V480.63"/><path d="M1174.8 484.63L1178.8 480.43L1182.8 484.63"/></g><path fill="none" stroke="#1c9fbb" stroke-width="2.3" stroke-linejoin="round" d="M1229.8 498.83L1220.2 489.83C1215.5 485.13 1218 478.63 1223.3 478.63C1226.3 478.63 1228.6 480.63 1229.8 482.83C1231 480.63 1233.3 478.63 1236.3 478.63C1241.6 478.63 1244.1 485.13 1239.4 489.83Z"/><g fill="none" stroke="#8a948a" stroke-width="2"><path d="M1255.2 488.63C1258 482.13 1262.5 479.43 1268 479.43C1273.5 479.43 1278 482.13 1280.8 488.63C1278 495.13 1273.5 497.83 1268 497.83C1262.5 497.83 1258 495.13 1255.2 488.63Z"/><circle cx="1268" cy="488.63" r="4.1"/></g></svg>
<svg class="r" style="left:0;top:0;overflow:visible" width="2184" height="1180" viewBox="0 0 2184 1180"><circle cx="1334.70" cy="489.60" r="1.6" fill="#7fb069"/><circle cx="1330.48" cy="491.79" r="1.4" fill="#355c7d"/><circle cx="1333.21" cy="496.11" r="1.6" fill="#7fb069"/><circle cx="1328.46" cy="496.25" r="1.4" fill="#355c7d"/><circle cx="1329.05" cy="501.33" r="1.6" fill="#7fb069"/><circle cx="1324.71" cy="499.39" r="1.4" fill="#355c7d"/><circle cx="1323.04" cy="504.22" r="1.6" fill="#7fb069"/><circle cx="1319.97" cy="500.60" r="1.4" fill="#355c7d"/><circle cx="1316.36" cy="504.22" r="1.6" fill="#7fb069"/><circle cx="1315.17" cy="499.62" r="1.4" fill="#355c7d"/><circle cx="1310.35" cy="501.33" r="1.6" fill="#7fb069"/><circle cx="1311.27" cy="496.67" r="1.4" fill="#355c7d"/><circle cx="1306.19" cy="496.11" r="1.6" fill="#7fb069"/><circle cx="1309.04" cy="492.31" r="1.4" fill="#355c7d"/><circle cx="1304.70" cy="489.60" r="1.6" fill="#7fb069"/><circle cx="1308.92" cy="487.41" r="1.4" fill="#355c7d"/><circle cx="1306.19" cy="483.09" r="1.6" fill="#7fb069"/><circle cx="1310.94" cy="482.95" r="1.4" fill="#355c7d"/><circle cx="1310.35" cy="477.87" r="1.6" fill="#7fb069"/><circle cx="1314.69" cy="479.81" r="1.4" fill="#355c7d"/><circle cx="1316.36" cy="474.98" r="1.6" fill="#7fb069"/><circle cx="1319.43" cy="478.60" r="1.4" fill="#355c7d"/><circle cx="1323.04" cy="474.98" r="1.6" fill="#7fb069"/><circle cx="1324.23" cy="479.58" r="1.4" fill="#355c7d"/><circle cx="1329.05" cy="477.87" r="1.6" fill="#7fb069"/><circle cx="1328.13" cy="482.53" r="1.4" fill="#355c7d"/><circle cx="1333.21" cy="483.09" r="1.6" fill="#7fb069"/><circle cx="1330.36" cy="486.89" r="1.4" fill="#355c7d"/><text x="1343.8" y="496.8" font-size="21.08" font-weight="normal" fill="#5e6d62" textLength="78" lengthAdjust="spacingAndGlyphs" font-family="Liberation Sans" >Brighten</text><circle cx="1423" cy="484" r="1.5" fill="#5e6d62"/></svg>
<div class="t" style="left:1443.70px;top:481.00px;font-size:18.17px;color:#1f261f;-webkit-text-stroke:0.3px #1f261f;">$1,126,660</div>
<div class="t" style="left:1562.00px;top:481.00px;font-size:18.17px;color:#1f261f;-webkit-text-stroke:0.3px #1f261f;transform:scaleX(1.0105);">$4,637.59</div>
<div class="t" style="left:1667.60px;top:481.00px;font-size:18.17px;color:#1f261f;-webkit-text-stroke:0.3px #1f261f;transform:scaleX(1.0134);">2.44</div>
<div class="r" style="left:1723.00px;top:472.13px;width:62.70px;height:33.00px;border:1.8px solid #243024;border-radius:4px;box-sizing:border-box;background:transparent;box-shadow:0 1.5px 2px rgba(0,0,0,.22);"></div>
<div class="t" style="left:1729.10px;top:480.00px;font-size:18.17px;color:#1f261f;-webkit-text-stroke:0.3px #1f261f;transform:scaleX(0.9637);">6.09%</div>
<div class="t" style="left:1804.80px;top:481.00px;font-size:18.17px;color:#1f261f;-webkit-text-stroke:0.3px #1f261f;transform:scaleX(0.9637);">8.09%</div>
<div class="t" style="left:1880.60px;top:481.00px;font-size:18.17px;color:#1f261f;-webkit-text-stroke:0.3px #1f261f;transform:scaleX(0.9961);">$4,814</div>
<div class="r" style="left:1950.10px;top:472.93px;width:84.40px;height:32.20px;border:1.3px solid #7b857b;border-radius:4px;box-sizing:border-box;box-shadow:0 1.5px 2px rgba(0,0,0,.22);"></div>
<svg class="r" style="left:0;top:0" width="2184" height="1180" viewBox="0 0 2184 1180"><path d="M1979 489.83H2005" stroke="#3a3a3a" stroke-width="1.3" stroke-dasharray="4.3 1.1"/></svg>
<svg class="r" style="left:2054.00px;top:473.13px;" width="31.00" height="31.00" viewBox="0 0 24 24"><path fill="#f0a030" d="M12 5.99L19.53 19H4.47L12 5.99M12 2L1 21h22L12 2zm1 14h-2v2h2v-2zm0-6h-2v4h2v-4z"/></svg>
<div class="r" style="left:1153.00px;top:518.84px;width:54.00px;height:1.00px;background:#ececec;"></div>
<svg class="r" style="left:0;top:0" width="2184" height="1180" viewBox="0 0 2184 1180"><g fill="none" stroke="#cfcfcf" stroke-width="2.6" stroke-linecap="round" stroke-linejoin="round"><path d="M1169.6 553.04v2.6a1.6 1.6 0 0 0 1.6 1.6h15.2a1.6 1.6 0 0 0 1.6 -1.6v-2.6"/><path d="M1178.8 549.84V539.84"/><path d="M1174.8 543.84L1178.8 539.64L1182.8 543.84"/></g><path fill="none" stroke="#1c9fbb" stroke-width="2.3" stroke-linejoin="round" d="M1229.8 558.04L1220.2 549.04C1215.5 544.34 1218 537.84 1223.3 537.84C1226.3 537.84 1228.6 539.84 1229.8 542.04C1231 539.84 1233.3 537.84 1236.3 537.84C1241.6 537.84 1244.1 544.34 1239.4 549.04Z"/><g fill="none" stroke="#8a948a" stroke-width="2"><path d="M1255.2 547.84C1258 541.34 1262.5 538.64 1268 538.64C1273.5 538.64 1278 541.34 1280.8 547.84C1278 554.34 1273.5 557.04 1268 557.04C1262.5 557.04 1258 554.34 1255.2 547.84Z"/><circle cx="1268" cy="547.84" r="4.1"/></g></svg>
<svg class="r" style="left:0;top:0;overflow:visible" width="2184" height="1180" viewBox="0 0 2184 1180"><text x="1332.4" y="556.3" font-size="21.08" font-weight="bold" fill="#7a1c22" textLength="64" lengthAdjust="spacingAndGlyphs" font-family="Liberation Sans" stroke="#7a1c22" stroke-width="1.2">ZEUS</text></svg>
<div class="t" style="left:1443.70px;top:540.00px;font-size:18.17px;color:#1f261f;-webkit-text-stroke:0.3px #1f261f;">$1,124,648</div>
<div class="t" style="left:1562.00px;top:540.00px;font-size:18.17px;color:#1f261f;-webkit-text-stroke:0.3px #1f261f;transform:scaleX(1.0105);">$4,401.91</div>
<div class="t" style="left:1667.60px;top:540.00px;font-size:18.17px;color:#1f261f;-webkit-text-stroke:0.3px #1f261f;transform:scaleX(1.0134);">2.43</div>
<div class="r" style="left:1723.00px;top:531.34px;width:62.70px;height:33.00px;border:1.8px solid #243024;border-radius:4px;box-sizing:border-box;background:transparent;box-shadow:0 1.5px 2px rgba(0,0,0,.22);"></div>
<div class="t" style="left:1729.10px;top:540.00px;font-size:18.17px;color:#1f261f;-webkit-text-stroke:0.3px #1f261f;transform:scaleX(0.9637);">5.58%</div>
<div class="t" style="left:1804.80px;top:540.00px;font-size:18.17px;color:#1f261f;-webkit-text-stroke:0.3px #1f261f;transform:scaleX(0.9637);">7.58%</div>
<div class="t" style="left:1880.60px;top:540.00px;font-size:18.17px;color:#1f261f;-webkit-text-stroke:0.3px #1f261f;transform:scaleX(0.9961);">$5,227</div>
<div class="r" style="left:1950.10px;top:532.14px;width:84.40px;height:32.20px;border:1.3px solid #7b857b;border-radius:4px;box-sizing:border-box;box-shadow:0 1.5px 2px rgba(0,0,0,.22);"></div>
<svg class="r" style="left:0;top:0" width="2184" height="1180" viewBox="0 0 2184 1180"><path d="M1979 549.04H2005" stroke="#3a3a3a" stroke-width="1.3" stroke-dasharray="4.3 1.1"/></svg>
<div class="r" style="left:1153.00px;top:578.05px;width:54.00px;height:1.00px;background:#ececec;"></div>
<svg class="r" style="left:0;top:0" width="2184" height="1180" viewBox="0 0 2184 1180"><g fill="none" stroke="#1c9fbb" stroke-width="2.6" stroke-linecap="round" stroke-linejoin="round"><path d="M1169.6 612.25v2.6a1.6 1.6 0 0 0 1.6 1.6h15.2a1.6 1.6 0 0 0 1.6 -1.6v-2.6"/><path d="M1178.8 609.05V599.05"/><path d="M1174.8 603.05L1178.8 598.85L1182.8 603.05"/></g><path fill="none" stroke="#1c9fbb" stroke-width="2.3" stroke-linejoin="round" d="M1229.8 617.25L1220.2 608.25C1215.5 603.55 1218 597.05 1223.3 597.05C1226.3 597.05 1228.6 599.05 1229.8 601.25C1231 599.05 1233.3 597.05 1236.3 597.05C1241.6 597.05 1244.1 603.55 1239.4 608.25Z"/><g fill="none" stroke="#8a948a" stroke-width="2"><path d="M1255.2 607.05C1258 600.55 1262.5 597.85 1268 597.85C1273.5 597.85 1278 600.55 1280.8 607.05C1278 613.55 1273.5 616.25 1268 616.25C1262.5 616.25 1258 613.55 1255.2 607.05Z"/><circle cx="1268" cy="607.05" r="4.1"/></g></svg>
<svg class="r" style="left:0;top:0;overflow:visible" width="2184" height="1180" viewBox="0 0 2184 1180"><text x="1313.6" y="603.6" font-size="15.41" font-weight="normal" fill="#1c2f5e" textLength="100" font-family="Liberation Sans" lengthAdjust="spacing" stroke="#1c2f5e" stroke-width="0.5">MORTGAGE</text><text x="1313.6" y="624.2" font-size="23.26" font-weight="bold" fill="#1c2f5e" textLength="99.5" font-family="Liberation Sans" lengthAdjust="spacing">STREET</text></svg>
<div class="t" style="left:1443.70px;top:599.00px;font-size:18.17px;color:#1f261f;-webkit-text-stroke:0.3px #1f261f;">$1,123,590</div>
<div class="t" style="left:1562.00px;top:599.00px;font-size:18.17px;color:#1f261f;-webkit-text-stroke:0.3px #1f261f;transform:scaleX(1.0105);">$4,445.95</div>
<div class="t" style="left:1667.60px;top:599.00px;font-size:18.17px;color:#1f261f;-webkit-text-stroke:0.3px #1f261f;transform:scaleX(1.0134);">2.44</div>
<div class="r" style="left:1723.00px;top:590.55px;width:62.70px;height:33.00px;border:1.8px solid #243024;border-radius:4px;box-sizing:border-box;background:#dcdcdc;box-shadow:0 1.5px 2px rgba(0,0,0,.22);"></div>
<div class="t" style="left:1729.10px;top:599.00px;font-size:18.17px;color:#1f261f;-webkit-text-stroke:0.3px #1f261f;transform:scaleX(0.9637);">5.70%</div>
<div class="t" style="left:1804.80px;top:599.00px;font-size:18.17px;color:#1f261f;-webkit-text-stroke:0.3px #1f261f;transform:scaleX(0.9637);">7.70%</div>
<div class="t" style="left:1880.60px;top:599.00px;font-size:18.17px;color:#1f261f;-webkit-text-stroke:0.3px #1f261f;transform:scaleX(0.9961);">$5,141</div>
<div class="r" style="left:1950.10px;top:591.35px;width:84.40px;height:32.20px;border:1.3px solid #7b857b;border-radius:4px;box-sizing:border-box;box-shadow:0 1.5px 2px rgba(0,0,0,.22);"></div>
<svg class="r" style="left:0;top:0" width="2184" height="1180" viewBox="0 0 2184 1180"><path d="M1979 608.25H2005" stroke="#3a3a3a" stroke-width="1.3" stroke-dasharray="4.3 1.1"/></svg>
<div class="r" style="left:1153.00px;top:637.26px;width:54.00px;height:1.00px;background:#ececec;"></div>
<svg class="r" style="left:0;top:0" width="2184" height="1180" viewBox="0 0 2184 1180"><g fill="none" stroke="#1c9fbb" stroke-width="2.6" stroke-linecap="round" stroke-linejoin="round"><path d="M1169.6 671.46v2.6a1.6 1.6 0 0 0 1.6 1.6h15.2a1.6 1.6 0 0 0 1.6 -1.6v-2.6"/><path d="M1178.8 668.26V658.26"/><path d="M1174.8 662.26L1178.8 658.06L1182.8 662.26"/></g><path fill="none" stroke="#1c9fbb" stroke-width="2.3" stroke-linejoin="round" d="M1229.8 676.46L1220.2 667.46C1215.5 662.76 1218 656.26 1223.3 656.26C1226.3 656.26 1228.6 658.26 1229.8 660.46C1231 658.26 1233.3 656.26 1236.3 656.26C1241.6 656.26 1244.1 662.76 1239.4 667.46Z"/><g fill="none" stroke="#8a948a" stroke-width="2"><path d="M1255.2 666.26C1258 659.76 1262.5 657.06 1268 657.06C1273.5 657.06 1278 659.76 1280.8 666.26C1278 672.76 1273.5 675.46 1268 675.46C1262.5 675.46 1258 672.76 1255.2 666.26Z"/><circle cx="1268" cy="666.26" r="4.1"/></g></svg>
<svg class="r" style="left:0;top:0;overflow:visible" width="2184" height="1180" viewBox="0 0 2184 1180"><g fill="none" stroke-linecap="round"><path d="M1302.8 678 Q1298 668 1291.5 665.5" stroke="#1d6470" stroke-width="4.2"/><path d="M1302.5 676 Q1300.5 666 1297 659.5" stroke="#d9263a" stroke-width="3.8"/><path d="M1302.8 671 Q1308 657.5 1321.5 656.3" stroke="#6fd3d6" stroke-width="3.4"/><path d="M1303 675 Q1310 665.5 1321.5 665.5" stroke="#d9263a" stroke-width="4"/><path d="M1303 678 Q1312 672.5 1321.5 673.8" stroke="#1d6470" stroke-width="4.2"/></g><text x="1328.7" y="663.2" font-size="12.94" font-weight="bold" fill="#2d7b80" textLength="108.9" lengthAdjust="spacingAndGlyphs" font-family="Liberation Sans" >Mortgage Choice</text><rect x="1328.7" y="667.9" width="44.9" height="11.8" rx="1" fill="#ee2a96"/><text x="1331.5" y="677.3" font-size="10.17" font-weight="bold" fill="#ffd6ee" textLength="39" lengthAdjust="spacingAndGlyphs" font-family="Liberation Sans" >Freedom</text></svg>
<div class="t" style="left:1443.70px;top:658.00px;font-size:18.17px;color:#1f261f;-webkit-text-stroke:0.3px #1f261f;">$1,105,375</div>
<div class="t" style="left:1562.00px;top:658.00px;font-size:18.17px;color:#1f261f;-webkit-text-stroke:0.3px #1f261f;transform:scaleX(1.0105);">$4,416.74</div>
<div class="t" style="left:1667.60px;top:658.00px;font-size:18.17px;color:#1f261f;-webkit-text-stroke:0.3px #1f261f;transform:scaleX(1.0134);">2.44</div>
<div class="r" style="left:1723.00px;top:649.76px;width:62.70px;height:33.00px;border:1.8px solid #243024;border-radius:4px;box-sizing:border-box;background:transparent;box-shadow:0 1.5px 2px rgba(0,0,0,.22);"></div>
<div class="t" style="left:1729.10px;top:658.00px;font-size:18.17px;color:#1f261f;-webkit-text-stroke:0.3px #1f261f;transform:scaleX(0.9637);">5.94%</div>
<div class="t" style="left:1804.80px;top:658.00px;font-size:18.17px;color:#1f261f;-webkit-text-stroke:0.3px #1f261f;transform:scaleX(0.9637);">7.94%</div>
<div class="t" style="left:1880.60px;top:658.00px;font-size:18.17px;color:#1f261f;-webkit-text-stroke:0.3px #1f261f;transform:scaleX(0.9961);">$5,087</div>
<div class="r" style="left:1950.10px;top:650.56px;width:84.40px;height:32.20px;border:1.3px solid #7b857b;border-radius:4px;box-sizing:border-box;box-shadow:0 1.5px 2px rgba(0,0,0,.22);"></div>
<svg class="r" style="left:0;top:0" width="2184" height="1180" viewBox="0 0 2184 1180"><path d="M1979 667.46H2005" stroke="#3a3a3a" stroke-width="1.3" stroke-dasharray="4.3 1.1"/></svg>
<div class="r" style="left:1153.00px;top:696.47px;width:54.00px;height:1.00px;background:#ececec;"></div>
<svg class="r" style="left:0;top:0" width="2184" height="1180" viewBox="0 0 2184 1180"><g fill="none" stroke="#1c9fbb" stroke-width="2.6" stroke-linecap="round" stroke-linejoin="round"><path d="M1169.6 730.67v2.6a1.6 1.6 0 0 0 1.6 1.6h15.2a1.6 1.6 0 0 0 1.6 -1.6v-2.6"/><path d="M1178.8 727.47V717.47"/><path d="M1174.8 721.47L1178.8 717.27L1182.8 721.47"/></g><path fill="none" stroke="#1c9fbb" stroke-width="2.3" stroke-linejoin="round" d="M1229.8 735.67L1220.2 726.67C1215.5 721.97 1218 715.47 1223.3 715.47C1226.3 715.47 1228.6 717.47 1229.8 719.67C1231 717.47 1233.3 715.47 1236.3 715.47C1241.6 715.47 1244.1 721.97 1239.4 726.67Z"/><g fill="none" stroke="#8a948a" stroke-width="2"><path d="M1255.2 725.47C1258 718.97 1262.5 716.27 1268 716.27C1273.5 716.27 1278 718.97 1280.8 725.47C1278 731.97 1273.5 734.67 1268 734.67C1262.5 734.67 1258 731.97 1255.2 725.47Z"/><circle cx="1268" cy="725.47" r="4.1"/></g></svg>
<svg class="r" style="left:0;top:0;overflow:visible" width="2184" height="1180" viewBox="0 0 2184 1180"><g fill="none" stroke="#e4484b" stroke-width="2.8" stroke-linecap="round"><path d="M1333.8 739 A13.6 13.6 0 1 1 1346.6 739"/><path d="M1335.5 721.5 q3.5 -1 3.5 3 q-1 4 -4 6.5 M1327 731 q6 -3 9 -1 q3 2 4 6 M1336.5 731.5 q5 -5 8.5 -1 v9"/></g><text x="1359.6" y="725.1" font-size="16.13" font-weight="bold" fill="#1e2a22" textLength="34.3" lengthAdjust="spacingAndGlyphs" font-family="Liberation Sans" >Own</text><text x="1359.6" y="738.6" font-size="15.99" font-weight="bold" fill="#1e2a22" textLength="45.3" lengthAdjust="spacingAndGlyphs" font-family="Liberation Sans" >Home</text></svg>
<div class="t" style="left:1443.70px;top:717.00px;font-size:18.17px;color:#1f261f;-webkit-text-stroke:0.3px #1f261f;">$1,105,352</div>
<div class="t" style="left:1562.00px;top:717.00px;font-size:18.17px;color:#1f261f;-webkit-text-stroke:0.3px #1f261f;transform:scaleX(1.0105);">$4,387.12</div>
<div class="t" style="left:1667.60px;top:717.00px;font-size:18.17px;color:#1f261f;-webkit-text-stroke:0.3px #1f261f;transform:scaleX(1.0134);">2.44</div>
<div class="r" style="left:1723.00px;top:708.97px;width:62.70px;height:33.00px;border:1.8px solid #243024;border-radius:4px;box-sizing:border-box;background:#fdd77a;box-shadow:0 1.5px 2px rgba(0,0,0,.22);"></div>
<div class="t" style="left:1729.10px;top:717.00px;font-size:18.17px;color:#1f261f;-webkit-text-stroke:0.3px #1f261f;transform:scaleX(0.9637);">5.87%</div>
<div class="t" style="left:1804.80px;top:717.00px;font-size:18.17px;color:#1f261f;-webkit-text-stroke:0.3px #1f261f;transform:scaleX(0.9637);">7.87%</div>
<div class="t" style="left:1880.60px;top:717.00px;font-size:18.17px;color:#1f261f;-webkit-text-stroke:0.3px #1f261f;transform:scaleX(0.9961);">$5,141</div>
<div class="r" style="left:1950.10px;top:709.77px;width:84.40px;height:32.20px;border:1.3px solid #7b857b;border-radius:4px;box-sizing:border-box;box-shadow:0 1.5px 2px rgba(0,0,0,.22);"></div>
<svg class="r" style="left:0;top:0" width="2184" height="1180" viewBox="0 0 2184 1180"><path d="M1979 726.67H2005" stroke="#3a3a3a" stroke-width="1.3" stroke-dasharray="4.3 1.1"/></svg>
<svg class="r" style="left:2054.00px;top:709.97px;" width="31.00" height="31.00" viewBox="0 0 24 24"><path fill="#f0a030" d="M12 5.99L19.53 19H4.47L12 5.99M12 2L1 21h22L12 2zm1 14h-2v2h2v-2zm0-6h-2v4h2v-4z"/></svg>
<div class="r" style="left:1153.00px;top:755.68px;width:54.00px;height:1.00px;background:#ececec;"></div>
<svg class="r" style="left:0;top:0" width="2184" height="1180" viewBox="0 0 2184 1180"><g fill="none" stroke="#cfcfcf" stroke-width="2.6" stroke-linecap="round" stroke-linejoin="round"><path d="M1169.6 789.88v2.6a1.6 1.6 0 0 0 1.6 1.6h15.2a1.6 1.6 0 0 0 1.6 -1.6v-2.6"/><path d="M1178.8 786.68V776.68"/><path d="M1174.8 780.68L1178.8 776.48L1182.8 780.68"/></g><path fill="none" stroke="#1c9fbb" stroke-width="2.3" stroke-linejoin="round" d="M1229.8 794.88L1220.2 785.88C1215.5 781.18 1218 774.68 1223.3 774.68C1226.3 774.68 1228.6 776.68 1229.8 778.88C1231 776.68 1233.3 774.68 1236.3 774.68C1241.6 774.68 1244.1 781.18 1239.4 785.88Z"/><g fill="none" stroke="#8a948a" stroke-width="2"><path d="M1255.2 784.68C1258 778.18 1262.5 775.48 1268 775.48C1273.5 775.48 1278 778.18 1280.8 784.68C1278 791.18 1273.5 793.88 1268 793.88C1262.5 793.88 1258 791.18 1255.2 784.68Z"/><circle cx="1268" cy="784.68" r="4.1"/></g></svg>
<svg class="r" style="left:0;top:0;overflow:visible" width="2184" height="1180" viewBox="0 0 2184 1180"><path d="M1308.3 792.8 L1328 774.5 L1326 784 L1333.5 784 L1324 792.8 Z" fill="#21aed0"/><text x="1337.3" y="792.8" font-size="25.44" font-weight="bold" fill="#1f3c70" textLength="80.8" lengthAdjust="spacingAndGlyphs" font-family="Liberation Sans" >Liberty</text></svg>
<div class="t" style="left:1443.70px;top:777.00px;font-size:18.17px;color:#1f261f;-webkit-text-stroke:0.3px #1f261f;">$1,104,636</div>
<div class="t" style="left:1562.00px;top:777.00px;font-size:18.17px;color:#1f261f;-webkit-text-stroke:0.3px #1f261f;transform:scaleX(1.0105);">$4,306.65</div>
<div class="t" style="left:1667.60px;top:777.00px;font-size:18.17px;color:#1f261f;-webkit-text-stroke:0.3px #1f261f;transform:scaleX(1.0134);">2.44</div>
<div class="r" style="left:1723.00px;top:768.18px;width:62.70px;height:33.00px;border:1.8px solid #243024;border-radius:4px;box-sizing:border-box;background:transparent;box-shadow:0 1.5px 2px rgba(0,0,0,.22);"></div>
<div class="t" style="left:1729.10px;top:776.00px;font-size:18.17px;color:#1f261f;-webkit-text-stroke:0.3px #1f261f;transform:scaleX(0.9637);">6.69%</div>
<div class="t" style="left:1804.80px;top:777.00px;font-size:18.17px;color:#1f261f;-webkit-text-stroke:0.3px #1f261f;transform:scaleX(0.9637);">7.69%</div>
<div class="t" style="left:1880.60px;top:777.00px;font-size:18.17px;color:#1f261f;-webkit-text-stroke:0.3px #1f261f;transform:scaleX(0.9961);">$5,284</div>
<div class="r" style="left:1950.10px;top:768.98px;width:84.40px;height:32.20px;border:1.3px solid #7b857b;border-radius:4px;box-sizing:border-box;box-shadow:0 1.5px 2px rgba(0,0,0,.22);"></div>
<svg class="r" style="left:0;top:0" width="2184" height="1180" viewBox="0 0 2184 1180"><path d="M1979 785.88H2005" stroke="#3a3a3a" stroke-width="1.3" stroke-dasharray="4.3 1.1"/></svg>
<div class="r" style="left:1153.00px;top:814.89px;width:54.00px;height:1.00px;background:#ececec;"></div>
<svg class="r" style="left:0;top:0" width="2184" height="1180" viewBox="0 0 2184 1180"><g fill="none" stroke="#1c9fbb" stroke-width="2.6" stroke-linecap="round" stroke-linejoin="round"><path d="M1169.6 849.09v2.6a1.6 1.6 0 0 0 1.6 1.6h15.2a1.6 1.6 0 0 0 1.6 -1.6v-2.6"/><path d="M1178.8 845.89V835.89"/><path d="M1174.8 839.89L1178.8 835.69L1182.8 839.89"/></g><path fill="none" stroke="#1c9fbb" stroke-width="2.3" stroke-linejoin="round" d="M1229.8 854.09L1220.2 845.09C1215.5 840.39 1218 833.89 1223.3 833.89C1226.3 833.89 1228.6 835.89 1229.8 838.09C1231 835.89 1233.3 833.89 1236.3 833.89C1241.6 833.89 1244.1 840.39 1239.4 845.09Z"/><g fill="none" stroke="#8a948a" stroke-width="2"><path d="M1255.2 843.89C1258 837.39 1262.5 834.69 1268 834.69C1273.5 834.69 1278 837.39 1280.8 843.89C1278 850.39 1273.5 853.09 1268 853.09C1262.5 853.09 1258 850.39 1255.2 843.89Z"/><circle cx="1268" cy="843.89" r="4.1"/></g></svg>
<svg class="r" style="left:0;top:0;overflow:visible" width="2184" height="1180" viewBox="0 0 2184 1180"><circle cx="1323.2" cy="845.1" r="14.1" fill="#f2c230"/><path d="M1311.5 853 L1337.2 846 A14.1 14.1 0 0 1 1311.5 853 Z" fill="#df2f5a"/><path d="M1311 852.6 L1337.5 845.4" stroke="#f6e6c0" stroke-width="1.3"/><text x="1344.9" y="847.7" font-size="18.90" font-weight="bold" fill="#223447" textLength="74" lengthAdjust="spacingAndGlyphs" font-family="Liberation Sans" >APOLLO</text><text x="1345" y="857" font-size="5.81" font-weight="bold" fill="#223447" textLength="14" lengthAdjust="spacingAndGlyphs" font-family="Liberation Sans" >by LHG</text></svg>
<div class="t" style="left:1443.70px;top:836.00px;font-size:18.17px;color:#1f261f;-webkit-text-stroke:0.3px #1f261f;">$1,100,125</div>
<div class="t" style="left:1562.00px;top:836.00px;font-size:18.17px;color:#1f261f;-webkit-text-stroke:0.3px #1f261f;transform:scaleX(1.0105);">$4,399.33</div>
<div class="t" style="left:1667.60px;top:836.00px;font-size:18.17px;color:#1f261f;-webkit-text-stroke:0.3px #1f261f;transform:scaleX(1.0134);">2.44</div>
<div class="r" style="left:1723.00px;top:827.39px;width:62.70px;height:33.00px;border:1.8px solid #243024;border-radius:4px;box-sizing:border-box;background:transparent;box-shadow:0 1.5px 2px rgba(0,0,0,.22);"></div>
<div class="t" style="left:1729.10px;top:836.00px;font-size:18.17px;color:#1f261f;-webkit-text-stroke:0.3px #1f261f;transform:scaleX(0.9637);">5.99%</div>
<div class="t" style="left:1804.80px;top:836.00px;font-size:18.17px;color:#1f261f;-webkit-text-stroke:0.3px #1f261f;transform:scaleX(0.9637);">7.99%</div>
<div class="t" style="left:1880.60px;top:836.00px;font-size:18.17px;color:#1f261f;-webkit-text-stroke:0.3px #1f261f;transform:scaleX(0.9961);">$5,087</div>
<div class="r" style="left:1950.10px;top:828.19px;width:84.40px;height:32.20px;border:1.3px solid #7b857b;border-radius:4px;box-sizing:border-box;box-shadow:0 1.5px 2px rgba(0,0,0,.22);"></div>
<svg class="r" style="left:0;top:0" width="2184" height="1180" viewBox="0 0 2184 1180"><path d="M1979 845.09H2005" stroke="#3a3a3a" stroke-width="1.3" stroke-dasharray="4.3 1.1"/></svg>
<div class="r" style="left:1153.00px;top:874.10px;width:54.00px;height:1.00px;background:#ececec;"></div>
<svg class="r" style="left:0;top:0" width="2184" height="1180" viewBox="0 0 2184 1180"><g fill="none" stroke="#cfcfcf" stroke-width="2.6" stroke-linecap="round" stroke-linejoin="round"><path d="M1169.6 908.30v2.6a1.6 1.6 0 0 0 1.6 1.6h15.2a1.6 1.6 0 0 0 1.6 -1.6v-2.6"/><path d="M1178.8 905.10V895.10"/><path d="M1174.8 899.10L1178.8 894.90L1182.8 899.10"/></g><path fill="none" stroke="#1c9fbb" stroke-width="2.3" stroke-linejoin="round" d="M1229.8 913.30L1220.2 904.30C1215.5 899.60 1218 893.10 1223.3 893.10C1226.3 893.10 1228.6 895.10 1229.8 897.30C1231 895.10 1233.3 893.10 1236.3 893.10C1241.6 893.10 1244.1 899.60 1239.4 904.30Z"/><g fill="none" stroke="#8a948a" stroke-width="2"><path d="M1255.2 903.10C1258 896.60 1262.5 893.90 1268 893.90C1273.5 893.90 1278 896.60 1280.8 903.10C1278 909.60 1273.5 912.30 1268 912.30C1262.5 912.30 1258 909.60 1255.2 903.10Z"/><circle cx="1268" cy="903.10" r="4.1"/></g></svg>
<svg class="r" style="left:0;top:0;overflow:visible" width="2184" height="1180" viewBox="0 0 2184 1180"><text x="1307.5" y="917.9" font-size="28.92" font-weight="bold" fill="#111" textLength="34" lengthAdjust="spacingAndGlyphs" font-family="Liberation Sans" >GR</text><path d="M1343 917.9 L1350 889.7 L1357 917.9" stroke="#3a9a3a" stroke-width="3" fill="none"/><path d="M1350 889.7 L1357 917.9" stroke="#777" stroke-width="3" fill="none"/><text x="1360" y="917.9" font-size="28.92" font-weight="bold" fill="#111" textLength="61.2" lengthAdjust="spacingAndGlyphs" font-family="Liberation Sans" >NITE</text></svg>
<div class="t" style="left:1443.70px;top:895.00px;font-size:18.17px;color:#1f261f;-webkit-text-stroke:0.3px #1f261f;">$1,095,675</div>
<div class="t" style="left:1562.00px;top:895.00px;font-size:18.17px;color:#1f261f;-webkit-text-stroke:0.3px #1f261f;transform:scaleX(1.0105);">$4,308.74</div>
<div class="t" style="left:1667.60px;top:895.00px;font-size:18.17px;color:#1f261f;-webkit-text-stroke:0.3px #1f261f;transform:scaleX(1.0134);">2.43</div>
<div class="r" style="left:1723.00px;top:886.60px;width:62.70px;height:33.00px;border:1.8px solid #243024;border-radius:4px;box-sizing:border-box;background:transparent;box-shadow:0 1.5px 2px rgba(0,0,0,.22);"></div>
<div class="t" style="left:1729.10px;top:895.00px;font-size:18.17px;color:#1f261f;-webkit-text-stroke:0.3px #1f261f;transform:scaleX(0.9637);">5.85%</div>
<div class="t" style="left:1804.80px;top:895.00px;font-size:18.17px;color:#1f261f;-webkit-text-stroke:0.3px #1f261f;transform:scaleX(0.9637);">7.85%</div>
<div class="t" style="left:1880.60px;top:895.00px;font-size:18.17px;color:#1f261f;-webkit-text-stroke:0.3px #1f261f;transform:scaleX(0.9961);">$5,227</div>
<div class="r" style="left:1950.10px;top:887.40px;width:84.40px;height:32.20px;border:1.3px solid #7b857b;border-radius:4px;box-sizing:border-box;box-shadow:0 1.5px 2px rgba(0,0,0,.22);"></div>
<svg class="r" style="left:0;top:0" width="2184" height="1180" viewBox="0 0 2184 1180"><path d="M1979 904.30H2005" stroke="#3a3a3a" stroke-width="1.3" stroke-dasharray="4.3 1.1"/></svg>
<div class="r" style="left:1153.00px;top:933.31px;width:54.00px;height:1.00px;background:#ececec;"></div>
<svg class="r" style="left:0;top:0" width="2184" height="1180" viewBox="0 0 2184 1180"><g fill="none" stroke="#cfcfcf" stroke-width="2.6" stroke-linecap="round" stroke-linejoin="round"><path d="M1169.6 967.51v2.6a1.6 1.6 0 0 0 1.6 1.6h15.2a1.6 1.6 0 0 0 1.6 -1.6v-2.6"/><path d="M1178.8 964.31V954.31"/><path d="M1174.8 958.31L1178.8 954.11L1182.8 958.31"/></g><path fill="none" stroke="#1c9fbb" stroke-width="2.3" stroke-linejoin="round" d="M1229.8 972.51L1220.2 963.51C1215.5 958.81 1218 952.31 1223.3 952.31C1226.3 952.31 1228.6 954.31 1229.8 956.51C1231 954.31 1233.3 952.31 1236.3 952.31C1241.6 952.31 1244.1 958.81 1239.4 963.51Z"/><g fill="none" stroke="#8a948a" stroke-width="2"><path d="M1255.2 962.31C1258 955.81 1262.5 953.11 1268 953.11C1273.5 953.11 1278 955.81 1280.8 962.31C1278 968.81 1273.5 971.51 1268 971.51C1262.5 971.51 1258 968.81 1255.2 962.31Z"/><circle cx="1268" cy="962.31" r="4.1"/></g></svg>
<svg class="r" style="left:0;top:0;overflow:visible" width="2184" height="1180" viewBox="0 0 2184 1180"><text x="1331" y="971.2" font-size="21.22" font-weight="normal" fill="#2f3d3d" textLength="66.2" lengthAdjust="spacingAndGlyphs" font-family="Liberation Sans" >WLTH</text></svg>
<div class="t" style="left:1443.70px;top:954.00px;font-size:18.17px;color:#1f261f;-webkit-text-stroke:0.3px #1f261f;">$1,095,675</div>
<div class="t" style="left:1562.00px;top:954.00px;font-size:18.17px;color:#1f261f;-webkit-text-stroke:0.3px #1f261f;transform:scaleX(1.0105);">$4,308.74</div>
<div class="t" style="left:1667.60px;top:954.00px;font-size:18.17px;color:#1f261f;-webkit-text-stroke:0.3px #1f261f;transform:scaleX(1.0134);">2.43</div>
<div class="r" style="left:1723.00px;top:945.81px;width:62.70px;height:33.00px;border:1.8px solid #243024;border-radius:4px;box-sizing:border-box;background:transparent;box-shadow:0 1.5px 2px rgba(0,0,0,.22);"></div>
<div class="t" style="left:1729.10px;top:954.00px;font-size:18.17px;color:#1f261f;-webkit-text-stroke:0.3px #1f261f;transform:scaleX(0.9637);">5.85%</div>
<div class="t" style="left:1804.80px;top:954.00px;font-size:18.17px;color:#1f261f;-webkit-text-stroke:0.3px #1f261f;transform:scaleX(0.9637);">7.85%</div>
<div class="t" style="left:1880.60px;top:954.00px;font-size:18.17px;color:#1f261f;-webkit-text-stroke:0.3px #1f261f;transform:scaleX(0.9961);">$5,227</div>
<div class="r" style="left:1950.10px;top:946.61px;width:84.40px;height:32.20px;border:1.3px solid #7b857b;border-radius:4px;box-sizing:border-box;box-shadow:0 1.5px 2px rgba(0,0,0,.22);"></div>
<svg class="r" style="left:0;top:0" width="2184" height="1180" viewBox="0 0 2184 1180"><path d="M1979 963.51H2005" stroke="#3a3a3a" stroke-width="1.3" stroke-dasharray="4.3 1.1"/></svg>
<div class="r" style="left:1153.00px;top:992.52px;width:54.00px;height:1.00px;background:#ececec;"></div>
<svg class="r" style="left:0;top:0" width="2184" height="1180" viewBox="0 0 2184 1180"><g fill="none" stroke="#1c9fbb" stroke-width="2.6" stroke-linecap="round" stroke-linejoin="round"><path d="M1169.6 1026.72v2.6a1.6 1.6 0 0 0 1.6 1.6h15.2a1.6 1.6 0 0 0 1.6 -1.6v-2.6"/><path d="M1178.8 1023.52V1013.52"/><path d="M1174.8 1017.52L1178.8 1013.32L1182.8 1017.52"/></g><path fill="none" stroke="#1c9fbb" stroke-width="2.3" stroke-linejoin="round" d="M1229.8 1031.72L1220.2 1022.72C1215.5 1018.02 1218 1011.52 1223.3 1011.52C1226.3 1011.52 1228.6 1013.52 1229.8 1015.72C1231 1013.52 1233.3 1011.52 1236.3 1011.52C1241.6 1011.52 1244.1 1018.02 1239.4 1022.72Z"/><g fill="none" stroke="#8a948a" stroke-width="2"><path d="M1255.2 1021.52C1258 1015.02 1262.5 1012.32 1268 1012.32C1273.5 1012.32 1278 1015.02 1280.8 1021.52C1278 1028.02 1273.5 1030.72 1268 1030.72C1262.5 1030.72 1258 1028.02 1255.2 1021.52Z"/><circle cx="1268" cy="1021.52" r="4.1"/></g></svg>
<svg class="r" style="left:0;top:0;overflow:visible" width="2184" height="1180" viewBox="0 0 2184 1180"><text x="1336.8" y="1020.9" font-size="19.77" font-weight="bold" fill="#4ba3dc" textLength="54.6" lengthAdjust="spacingAndGlyphs" font-family="Liberation Sans" stroke="#4ba3dc" stroke-width="0.8">AFG</text><text x="1336.8" y="1029.7" font-size="8.58" font-weight="bold" fill="#4ba3dc" textLength="54.6" lengthAdjust="spacingAndGlyphs" font-family="Liberation Sans" >HOME LOANS</text><rect x="1336.8" y="1031" width="54.6" height="0.8" fill="#4ba3dc"/><text x="1355" y="1038.5" font-size="5.67" font-weight="bold" fill="#4ba3dc" textLength="18" lengthAdjust="spacingAndGlyphs" font-family="Liberation Sans" >RETRO</text></svg>
<div class="t" style="left:1443.70px;top:1014.00px;font-size:18.17px;color:#1f261f;-webkit-text-stroke:0.3px #1f261f;">$1,084,336</div>
<div class="t" style="left:1562.00px;top:1014.00px;font-size:18.17px;color:#1f261f;-webkit-text-stroke:0.3px #1f261f;transform:scaleX(1.0105);">$4,303.96</div>
<div class="t" style="left:1667.60px;top:1014.00px;font-size:18.17px;color:#1f261f;-webkit-text-stroke:0.3px #1f261f;transform:scaleX(1.0134);">2.44</div>
<div class="r" style="left:1723.00px;top:1005.02px;width:62.70px;height:33.00px;border:1.8px solid #243024;border-radius:4px;box-sizing:border-box;background:transparent;box-shadow:0 1.5px 2px rgba(0,0,0,.22);"></div>
<div class="t" style="left:1729.10px;top:1013.00px;font-size:18.17px;color:#1f261f;-webkit-text-stroke:0.3px #1f261f;transform:scaleX(0.9637);">6.04%</div>
<div class="t" style="left:1804.80px;top:1014.00px;font-size:18.17px;color:#1f261f;-webkit-text-stroke:0.3px #1f261f;transform:scaleX(0.9637);">8.04%</div>
<div class="t" style="left:1880.60px;top:1014.00px;font-size:18.17px;color:#1f261f;-webkit-text-stroke:0.3px #1f261f;transform:scaleX(0.9961);">$5,165</div>
<div class="r" style="left:1950.10px;top:1005.82px;width:84.40px;height:32.20px;border:1.3px solid #7b857b;border-radius:4px;box-sizing:border-box;box-shadow:0 1.5px 2px rgba(0,0,0,.22);"></div>
<svg class="r" style="left:0;top:0" width="2184" height="1180" viewBox="0 0 2184 1180"><path d="M1979 1022.72H2005" stroke="#3a3a3a" stroke-width="1.3" stroke-dasharray="4.3 1.1"/></svg>
<div class="r" style="left:1153.00px;top:1051.73px;width:54.00px;height:1.00px;background:#ececec;"></div>
<svg class="r" style="left:0;top:0" width="2184" height="1180" viewBox="0 0 2184 1180"><g fill="none" stroke="#cfcfcf" stroke-width="2.6" stroke-linecap="round" stroke-linejoin="round"><path d="M1169.6 1085.93v2.6a1.6 1.6 0 0 0 1.6 1.6h15.2a1.6 1.6 0 0 0 1.6 -1.6v-2.6"/><path d="M1178.8 1082.73V1072.73"/><path d="M1174.8 1076.73L1178.8 1072.53L1182.8 1076.73"/></g><path fill="none" stroke="#1c9fbb" stroke-width="2.3" stroke-linejoin="round" d="M1229.8 1090.93L1220.2 1081.93C1215.5 1077.23 1218 1070.73 1223.3 1070.73C1226.3 1070.73 1228.6 1072.73 1229.8 1074.93C1231 1072.73 1233.3 1070.73 1236.3 1070.73C1241.6 1070.73 1244.1 1077.23 1239.4 1081.93Z"/><g fill="none" stroke="#8a948a" stroke-width="2"><path d="M1255.2 1080.73C1258 1074.23 1262.5 1071.53 1268 1071.53C1273.5 1071.53 1278 1074.23 1280.8 1080.73C1278 1087.23 1273.5 1089.93 1268 1089.93C1262.5 1089.93 1258 1087.23 1255.2 1080.73Z"/><circle cx="1268" cy="1080.73" r="4.1"/></g></svg>
<svg class="r" style="left:0;top:0;overflow:visible" width="2184" height="1180" viewBox="0 0 2184 1180"><text x="1314.4" y="1081.4" font-size="21.37" font-weight="normal" fill="#222" textLength="83.8" lengthAdjust="spacingAndGlyphs" font-family="Liberation Sans" >firstmac</text><path d="M1312 1089 q15 -6 30 -1 q12 4 24 -3 q16 -3 32 2" stroke="#f5b920" stroke-width="2" fill="none"/><path d="M1312 1091 q18 -3 30 -5 q10 10 20 2 q18 -4 36 0" stroke="#e83a7a" stroke-width="2" fill="none"/><path d="M1313 1095 q18 -1 30 -2 q10 8 16 2 q12 -6 22 2 q8 -3 17 -3" stroke="#3ab4e6" stroke-width="2" fill="none"/><path d="M1342 1088 q8 8 14 8 q6 -2 10 -8" stroke="#283c8c" stroke-width="1.6" fill="none"/></svg>
<div class="t" style="left:1443.70px;top:1073.00px;font-size:18.17px;color:#1f261f;-webkit-text-stroke:0.3px #1f261f;">$1,080,440</div>
<div class="t" style="left:1562.00px;top:1073.00px;font-size:18.17px;color:#1f261f;-webkit-text-stroke:0.3px #1f261f;transform:scaleX(1.0105);">$4,315.85</div>
<div class="t" style="left:1667.60px;top:1073.00px;font-size:18.17px;color:#1f261f;-webkit-text-stroke:0.3px #1f261f;transform:scaleX(1.0134);">2.44</div>
<div class="r" style="left:1723.00px;top:1064.23px;width:62.70px;height:33.00px;border:1.8px solid #243024;border-radius:4px;box-sizing:border-box;background:transparent;box-shadow:0 1.5px 2px rgba(0,0,0,.22);"></div>
<div class="t" style="left:1729.10px;top:1072.00px;font-size:18.17px;color:#1f261f;-webkit-text-stroke:0.3px #1f261f;transform:scaleX(0.9637);">6.14%</div>
<div class="t" style="left:1804.80px;top:1073.00px;font-size:18.17px;color:#1f261f;-webkit-text-stroke:0.3px #1f261f;transform:scaleX(0.9637);">8.14%</div>
<div class="t" style="left:1880.60px;top:1073.00px;font-size:18.17px;color:#1f261f;-webkit-text-stroke:0.3px #1f261f;transform:scaleX(1.0208);">$5,118</div>
<div class="r" style="left:1950.10px;top:1065.03px;width:84.40px;height:32.20px;border:1.3px solid #7b857b;border-radius:4px;box-sizing:border-box;box-shadow:0 1.5px 2px rgba(0,0,0,.22);"></div>
<svg class="r" style="left:0;top:0" width="2184" height="1180" viewBox="0 0 2184 1180"><path d="M1979 1081.93H2005" stroke="#3a3a3a" stroke-width="1.3" stroke-dasharray="4.3 1.1"/></svg>
<svg class="r" style="left:2054.00px;top:1065.23px;" width="31.00" height="31.00" viewBox="0 0 24 24"><path fill="#f0a030" d="M12 5.99L19.53 19H4.47L12 5.99M12 2L1 21h22L12 2zm1 14h-2v2h2v-2zm0-6h-2v4h2v-4z"/></svg>
<div class="r" style="left:1153.00px;top:1110.94px;width:54.00px;height:1.00px;background:#ececec;"></div>
<svg class="r" style="left:0;top:0" width="2184" height="1180" viewBox="0 0 2184 1180"><g fill="none" stroke="#1c9fbb" stroke-width="2.6" stroke-linecap="round" stroke-linejoin="round"><path d="M1169.6 1145.14v2.6a1.6 1.6 0 0 0 1.6 1.6h15.2a1.6 1.6 0 0 0 1.6 -1.6v-2.6"/><path d="M1178.8 1141.94V1131.94"/><path d="M1174.8 1135.94L1178.8 1131.74L1182.8 1135.94"/></g><path fill="none" stroke="#1c9fbb" stroke-width="2.3" stroke-linejoin="round" d="M1229.8 1150.14L1220.2 1141.14C1215.5 1136.44 1218 1129.94 1223.3 1129.94C1226.3 1129.94 1228.6 1131.94 1229.8 1134.14C1231 1131.94 1233.3 1129.94 1236.3 1129.94C1241.6 1129.94 1244.1 1136.44 1239.4 1141.14Z"/><g fill="none" stroke="#8a948a" stroke-width="2"><path d="M1255.2 1139.94C1258 1133.44 1262.5 1130.74 1268 1130.74C1273.5 1130.74 1278 1133.44 1280.8 1139.94C1278 1146.44 1273.5 1149.14 1268 1149.14C1262.5 1149.14 1258 1146.44 1255.2 1139.94Z"/><circle cx="1268" cy="1139.94" r="4.1"/></g></svg>
<svg class="r" style="left:0;top:0;overflow:visible" width="2184" height="1180" viewBox="0 0 2184 1180"><rect x="1332.9" y="1128.1" width="61.4" height="18.6" fill="#1f5cb8"/><text x="1336" y="1143.5" font-size="15.26" font-weight="normal" fill="#fff" textLength="55" lengthAdjust="spacingAndGlyphs" font-family="Liberation Sans" >La Trobe</text><text x="1339" y="1154.5" font-size="6.69" font-weight="normal" fill="#3a5a9a" textLength="48" lengthAdjust="spacingAndGlyphs" font-family="Liberation Sans" letter-spacing="2">Financial</text></svg>
<div class="t" style="left:1443.70px;top:1132.00px;font-size:18.17px;color:#1f261f;-webkit-text-stroke:0.3px #1f261f;">$1,073,012</div>
<div class="t" style="left:1562.00px;top:1132.00px;font-size:18.17px;color:#1f261f;-webkit-text-stroke:0.3px #1f261f;transform:scaleX(1.0105);">$4,341.17</div>
<div class="t" style="left:1667.60px;top:1132.00px;font-size:18.17px;color:#1f261f;-webkit-text-stroke:0.3px #1f261f;transform:scaleX(1.0134);">2.44</div>
<div class="r" style="left:1723.00px;top:1123.44px;width:62.70px;height:33.00px;border:1.8px solid #243024;border-radius:4px;box-sizing:border-box;background:transparent;box-shadow:0 1.5px 2px rgba(0,0,0,.22);"></div>
<div class="t" style="left:1729.10px;top:1132.00px;font-size:18.17px;color:#1f261f;-webkit-text-stroke:0.3px #1f261f;transform:scaleX(0.9637);">6.34%</div>
<div class="t" style="left:1804.80px;top:1132.00px;font-size:18.17px;color:#1f261f;-webkit-text-stroke:0.3px #1f261f;transform:scaleX(0.9637);">8.34%</div>
<div class="t" style="left:1880.60px;top:1132.00px;font-size:18.17px;color:#1f261f;-webkit-text-stroke:0.3px #1f261f;transform:scaleX(0.9961);">$5,008</div>
<div class="r" style="left:1950.10px;top:1124.24px;width:84.40px;height:32.20px;border:1.3px solid #7b857b;border-radius:4px;box-sizing:border-box;box-shadow:0 1.5px 2px rgba(0,0,0,.22);"></div>
<svg class="r" style="left:0;top:0" width="2184" height="1180" viewBox="0 0 2184 1180"><path d="M1979 1141.14H2005" stroke="#3a3a3a" stroke-width="1.3" stroke-dasharray="4.3 1.1"/></svg>
<svg class="r" style="left:2054.00px;top:1124.44px;" width="31.00" height="31.00" viewBox="0 0 24 24"><path fill="#f0a030" d="M12 5.99L19.53 19H4.47L12 5.99M12 2L1 21h22L12 2zm1 14h-2v2h2v-2zm0-6h-2v4h2v-4z"/></svg>
<div class="r" style="left:1153.00px;top:339.50px;width:952.00px;height:2.60px;background:#b9c3b9;"></div>
<div class="r" style="left:1153.00px;top:1170.15px;width:54.00px;height:1.00px;background:#ececec;"></div>
<div class="r" style="left:2104.80px;top:208.00px;width:2.40px;height:1000.00px;background:#dcdcdc;"></div>
<div class="r" style="left:1152.00px;top:208.00px;width:1.60px;height:1000.00px;background:#e2e2e2;"></div>
</body></html>
